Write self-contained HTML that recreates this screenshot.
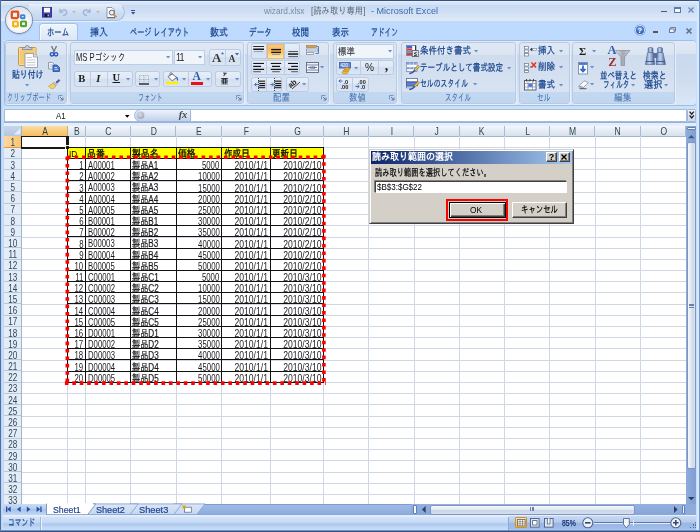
<!DOCTYPE html>
<html lang="ja"><head><meta charset="utf-8"><title>Microsoft Excel</title>
<style>
html,body{margin:0;padding:0}
body{width:700px;height:532px;overflow:hidden;position:relative;background:#c2d9f3;font-family:"Liberation Sans","IPAGothic",sans-serif;font-size:10px;color:#15428b;line-height:1}
.a{position:absolute}
.t{position:absolute;white-space:nowrap;transform-origin:0 50%;line-height:1}
.c{position:absolute;white-space:nowrap;line-height:1;text-align:center}
svg{position:absolute;overflow:visible}
</style></head>
<body>
<div id="win" style="position:absolute;left:0;top:0;width:700px;height:532px;overflow:hidden;will-change:transform">
<div class="a" style="left:0px;top:0px;width:700px;height:532px;background:#c3daf5;"></div>
<div class="a" style="left:0px;top:0px;width:700px;height:21px;background:linear-gradient(#dce8f8 0,#d3e2f6 5px,#c8dbf4 5.5px,#cfdff5 12px,#e0eaf7 20.5px);"></div>
<div class="a" style="left:0px;top:21px;width:700px;height:19px;background:#bedaff;"></div>
<div class="a" style="left:0px;top:39.5px;width:700px;height:1px;background:#d9e7fa;"></div>
<span class="t" style="transform:scaleX(0.872);left:263.60px;top:6.25px;font-size:9.5px;color:#7d8ca3;">wizard.xlsx</span>
<span class="t" style="transform:scaleX(0.875);left:310.70px;top:6.25px;font-size:9.5px;color:#5c6573;">[読み取り専用]</span>
<span class="t" style="transform:scaleX(0.954);left:370.70px;top:6.25px;font-size:9.5px;color:#3e6aaa;">- Microsoft Excel</span>
<div class="a" style="left:661px;top:11px;width:5.5px;height:1.4px;background:#5a5550;"></div>
<div class="a" style="left:674px;top:7px;width:7.2px;height:5.8px;border:1px solid #5a7aaa;border-top-width:2px;box-sizing:border-box;background:#f4f8fd;"></div>
<svg style="left:687.6px;top:7px" width="6" height="6"><path d="M0.5 0.5L5.5 5.5M5.5 0.5L0.5 5.5" stroke="#6a8ab8" stroke-width="1.25"/></svg>
<div class="a" style="left:29px;top:3.5px;width:96px;height:17px;border:1px solid #a4bfe3;border-top-color:#e9f1fb;border-radius:0 9px 9px 0;background:linear-gradient(#e1ebf8,#cbdcf2 60%,#c4d7f0);box-sizing:border-box;border-left:none;box-shadow:0 1px 0 #e6effa;"></div>
<div class="a" style="left:5.8px;top:6.7px;width:26.4px;height:26.4px;border-radius:50%;background:radial-gradient(circle at 50% 55%,#ffffff 0,#f9fafc 45%,#e6eaf1 68%,#c9d0dc 85%,#aab3c4 100%);box-shadow:0 0 0 0.9px #7f8899, 0 1px 2px rgba(40,60,100,.4);"></div>
<div class="a" style="left:6.8px;top:7.5px;width:24.4px;height:12.2px;border-radius:12.2px 12.2px 0 0;background:linear-gradient(rgba(225,230,240,.9),rgba(240,243,248,.35));"></div>
<svg style="left:10px;top:10.4px" width="18" height="18" viewBox="0 0 18 18"><rect x="1.8" y="1.7" width="6.4" height="6.4" rx="0.9" fill="none" stroke="#e2541b" stroke-width="2.3"/><rect x="10.9" y="5.1" width="3.6" height="3.2" rx="0.6" fill="none" stroke="#3a86dc" stroke-width="1.9"/><rect x="3.1" y="11.5" width="4.8" height="4.9" rx="0.7" fill="none" stroke="#f5b312" stroke-width="2.1"/><rect x="11" y="11.5" width="5" height="4.6" rx="0.7" fill="none" stroke="#58a52f" stroke-width="2.2"/><path d="M8 8L11 11M8 11.3L10.6 8.6" stroke="#fff" stroke-width="0.8" opacity="0.9"/></svg>
<svg style="left:42.3px;top:7.2px" width="10" height="11"><rect x="0.5" y="0.5" width="9" height="9.6" fill="#4646b8" stroke="#2e2e90" stroke-width="0.9"/><rect x="2" y="0.8" width="6" height="4.6" fill="#fdfdff"/><rect x="2.6" y="6.8" width="4.8" height="3.2" fill="#15153a"/><rect x="5.6" y="7.4" width="1.2" height="2" fill="#cfd3e8"/></svg>
<svg style="left:58.8px;top:8.4px" width="9" height="8"><path d="M1 0.8V4.2H4.4" fill="none" stroke="#9fb3d4" stroke-width="1.3"/><path d="M1.3 4C2.5 1.5 6.5 1 7.5 3.5C8.2 5.5 6.5 7.2 4 7.6" fill="none" stroke="#9fb3d4" stroke-width="1.5"/></svg>
<svg style="left:72.20px;top:11.41px" width="4.20" height="2.52" viewBox="0 0 5 3"><path d="M0 0H5L2.5 3z" fill="#c3bcb4"/></svg>
<svg style="left:82.3px;top:8.4px" width="9" height="8"><path d="M8 0.8V4.2H4.6" fill="none" stroke="#9fb3d4" stroke-width="1.3"/><path d="M7.7 4C6.5 1.5 2.5 1 1.5 3.5C0.8 5.5 2.5 7.2 5 7.6" fill="none" stroke="#9fb3d4" stroke-width="1.5"/></svg>
<svg style="left:96.20px;top:11.41px" width="4.20" height="2.52" viewBox="0 0 5 3"><path d="M0 0H5L2.5 3z" fill="#c3bcb4"/></svg>
<svg style="left:106px;top:7px" width="12" height="12"><path d="M1 0.5H6L8.5 3V10.5H1z" fill="#fdfdfd" stroke="#7a8494" stroke-width="0.8"/><path d="M1 10.8H9" stroke="#555" stroke-width="0.8"/><circle cx="5.8" cy="5.6" r="2.5" fill="#e9eef5" stroke="#555b66" stroke-width="0.9"/><path d="M7.6 7.6L10.4 10.2" stroke="#e08a1a" stroke-width="1.7"/></svg>
<div class="a" style="left:131px;top:9.8px;width:4.2px;height:1.1px;background:#2f4f96;"></div>
<svg style="left:130.97px;top:11.99px" width="4.25" height="2.55" viewBox="0 0 5 3"><path d="M0 0H5L2.5 3z" fill="#2f4f96"/></svg>
<div class="a" style="left:39.3px;top:22.8px;width:38.5px;height:17.7px;background:linear-gradient(#eef4fd,#e4edf8 55%,#dde7f4);border:1px solid #a3c2ea;border-bottom:none;border-radius:3.5px 3.5px 0 0;box-sizing:border-box;box-shadow:inset 1px 1px 0 #f6faff;"></div>
<span class="t" style="transform:scaleX(0.698);left:47.00px;top:27.15px;font-size:10.5px;color:#15428b;-webkit-text-stroke:0.2px #15428b;">ホーム</span>
<span class="t" style="transform:scaleX(0.857);left:90.00px;top:27.15px;font-size:10.5px;color:#15428b;-webkit-text-stroke:0.2px #15428b;">挿入</span>
<span class="t" style="transform:scaleX(0.679);left:130.00px;top:27.15px;font-size:10.5px;color:#15428b;-webkit-text-stroke:0.2px #15428b;">ページ レイアウト</span>
<span class="t" style="transform:scaleX(0.857);left:210.00px;top:27.15px;font-size:10.5px;color:#15428b;-webkit-text-stroke:0.2px #15428b;">数式</span>
<span class="t" style="transform:scaleX(0.730);left:249.00px;top:27.15px;font-size:10.5px;color:#15428b;-webkit-text-stroke:0.2px #15428b;">データ</span>
<span class="t" style="transform:scaleX(0.810);left:292.00px;top:27.15px;font-size:10.5px;color:#15428b;-webkit-text-stroke:0.2px #15428b;">校閲</span>
<span class="t" style="transform:scaleX(0.810);left:332.00px;top:27.15px;font-size:10.5px;color:#15428b;-webkit-text-stroke:0.2px #15428b;">表示</span>
<span class="t" style="transform:scaleX(0.643);left:371.00px;top:27.15px;font-size:10.5px;color:#15428b;-webkit-text-stroke:0.2px #15428b;">アドイン</span>
<div class="a" style="left:635.5px;top:26.3px;width:8.2px;height:8.2px;border-radius:50%;background:radial-gradient(circle at 50% 35%,#7fb0f0,#1f4fb0 80%);box-shadow:0 0 0 0.8px #f2f6fc,0 0 0 1.5px #6a8fc8;"></div>
<span class="t" style="left:637.50px;top:26.75px;font-size:7.5px;color:#fff;font-weight:bold;">?</span>
<div class="a" style="left:653px;top:31.4px;width:5px;height:1.4px;background:#5a5550;"></div>
<svg style="left:669px;top:27.4px" width="7" height="6"><rect x="1.8" y="0.6" width="4.6" height="3.4" fill="#f4f8fd" stroke="#5a6d90" stroke-width="0.9"/><rect x="0.5" y="2" width="4.6" height="3.4" fill="#f4f8fd" stroke="#5a6d90" stroke-width="0.9"/></svg>
<svg style="left:686.4px;top:27.6px" width="6" height="6"><path d="M0.5 0.5L5.5 5.5M5.5 0.5L0.5 5.5" stroke="#66707f" stroke-width="1.5"/></svg>
<div class="a" style="left:3.5px;top:40.3px;width:693px;height:65.6px;border:1px solid #9fbde6;border-radius:3.5px;background:linear-gradient(#e1e9f4 0,#d9e3f1 13px,#c8d8ee 13.5px,#cfddf0 40px,#d9e7f7 100%);box-sizing:border-box;"></div>
<div class="a" style="left:4.5px;top:105.9px;width:691px;height:1px;background:#bfe6f4;"></div>
<div class="a" style="left:5.4px;top:41.7px;width:62.00000000000001px;height:62px;border:1px solid #b9cbe4;border-radius:3px;background:linear-gradient(#e0e8f4 0,#dbe5f2 11.5px,#cfdcee 12px,#d8e4f3 51px);box-sizing:border-box;overflow:hidden;box-shadow:1px 1px 0 #e6eef9;"><div class="a" style="left:0;right:0;bottom:0;height:10.6px;background:linear-gradient(#c3d8f0,#c0d6f0);"></div></div>
<span class="t" style="transform:scaleX(0.629);left:7.20px;top:93.20px;font-size:10px;color:#3e6aaa;">クリップボード</span>
<div class="a" style="left:70.3px;top:41.7px;width:173.3px;height:62px;border:1px solid #b9cbe4;border-radius:3px;background:linear-gradient(#e0e8f4 0,#dbe5f2 11.5px,#cfdcee 12px,#d8e4f3 51px);box-sizing:border-box;overflow:hidden;box-shadow:1px 1px 0 #e6eef9;"><div class="a" style="left:0;right:0;bottom:0;height:10.6px;background:linear-gradient(#c3d8f0,#c0d6f0);"></div></div>
<span class="t" style="transform:scaleX(0.613);left:138.00px;top:93.20px;font-size:10px;color:#3e6aaa;">フォント</span>
<div class="a" style="left:247.1px;top:41.7px;width:82.20000000000002px;height:62px;border:1px solid #b9cbe4;border-radius:3px;background:linear-gradient(#e0e8f4 0,#dbe5f2 11.5px,#cfdcee 12px,#d8e4f3 51px);box-sizing:border-box;overflow:hidden;box-shadow:1px 1px 0 #e6eef9;"><div class="a" style="left:0;right:0;bottom:0;height:10.6px;background:linear-gradient(#c3d8f0,#c0d6f0);"></div></div>
<span class="t" style="transform:scaleX(0.850);left:273.00px;top:93.20px;font-size:10px;color:#3e6aaa;">配置</span>
<div class="a" style="left:332.9px;top:41.7px;width:64.5px;height:62px;border:1px solid #b9cbe4;border-radius:3px;background:linear-gradient(#e0e8f4 0,#dbe5f2 11.5px,#cfdcee 12px,#d8e4f3 51px);box-sizing:border-box;overflow:hidden;box-shadow:1px 1px 0 #e6eef9;"><div class="a" style="left:0;right:0;bottom:0;height:10.6px;background:linear-gradient(#c3d8f0,#c0d6f0);"></div></div>
<span class="t" style="transform:scaleX(0.850);left:349.30px;top:93.20px;font-size:10px;color:#3e6aaa;">数値</span>
<div class="a" style="left:400.7px;top:41.7px;width:115.30000000000001px;height:62px;border:1px solid #b9cbe4;border-radius:3px;background:linear-gradient(#e0e8f4 0,#dbe5f2 11.5px,#cfdcee 12px,#d8e4f3 51px);box-sizing:border-box;overflow:hidden;box-shadow:1px 1px 0 #e6eef9;"><div class="a" style="left:0;right:0;bottom:0;height:10.6px;background:linear-gradient(#c3d8f0,#c0d6f0);"></div></div>
<span class="t" style="transform:scaleX(0.650);left:445.00px;top:93.20px;font-size:10px;color:#3e6aaa;">スタイル</span>
<div class="a" style="left:519.3px;top:41.7px;width:50.30000000000007px;height:62px;border:1px solid #b9cbe4;border-radius:3px;background:linear-gradient(#e0e8f4 0,#dbe5f2 11.5px,#cfdcee 12px,#d8e4f3 51px);box-sizing:border-box;overflow:hidden;box-shadow:1px 1px 0 #e6eef9;"><div class="a" style="left:0;right:0;bottom:0;height:10.6px;background:linear-gradient(#c3d8f0,#c0d6f0);"></div></div>
<span class="t" style="transform:scaleX(0.675);left:537.20px;top:93.20px;font-size:10px;color:#3e6aaa;">セル</span>
<div class="a" style="left:572.1px;top:41.7px;width:102.5px;height:62px;border:1px solid #b9cbe4;border-radius:3px;background:linear-gradient(#e0e8f4 0,#dbe5f2 11.5px,#cfdcee 12px,#d8e4f3 51px);box-sizing:border-box;overflow:hidden;box-shadow:1px 1px 0 #e6eef9;"><div class="a" style="left:0;right:0;bottom:0;height:10.6px;background:linear-gradient(#c3d8f0,#c0d6f0);"></div></div>
<span class="t" style="transform:scaleX(0.875);left:614.00px;top:93.20px;font-size:10px;color:#3e6aaa;">編集</span>
<svg style="left:57.7px;top:95px" width="6" height="6"><path d="M0.5 4.5V0.5H4.5" fill="none" stroke="#7f97ba"/><path d="M2 2L5 5M5 2.5V5H2.5" fill="none" stroke="#5f7aa6"/></svg>
<svg style="left:235.5px;top:95px" width="6" height="6"><path d="M0.5 4.5V0.5H4.5" fill="none" stroke="#7f97ba"/><path d="M2 2L5 5M5 2.5V5H2.5" fill="none" stroke="#5f7aa6"/></svg>
<svg style="left:320.7px;top:95px" width="6" height="6"><path d="M0.5 4.5V0.5H4.5" fill="none" stroke="#7f97ba"/><path d="M2 2L5 5M5 2.5V5H2.5" fill="none" stroke="#5f7aa6"/></svg>
<svg style="left:388.5px;top:95px" width="6" height="6"><path d="M0.5 4.5V0.5H4.5" fill="none" stroke="#7f97ba"/><path d="M2 2L5 5M5 2.5V5H2.5" fill="none" stroke="#5f7aa6"/></svg>
<svg style="left:18px;top:45px" width="20" height="23"><rect x="0.500" y="2.500" width="17.500" height="18" rx="1" fill="#f2c977" stroke="#c79746"/><rect x="1.500" y="3.500" width="15.500" height="16" fill="none" stroke="#f9dfa6" stroke-width="0.800"/><path d="M4.500 4.500V2.500H7.200A2 2 0 0 1 11.200 2.500H14V4.500z" fill="#c9ccd2" stroke="#7d8390" stroke-width="0.800"/><path d="M7 8.500H15.500L19.500 12V22.500H7z" fill="#fdfdfe" stroke="#8e98a8" stroke-width="0.900"/><path d="M15.500 8.500V12H19.500" fill="#e2e6ee" stroke="#8e98a8" stroke-width="0.800"/><path d="M9 12.500H14M9 15H17.500M9 17.500H17.500M9 20H17.500" stroke="#c5c9d2" stroke-width="1.200"/></svg>
<span class="t" style="transform:scaleX(0.787);left:11.50px;top:70.30px;font-size:10px;color:#15428b;-webkit-text-stroke:0.250px #15428b;">貼り付け</span>
<svg style="left:24.90px;top:83.71px" width="4.20" height="2.52" viewBox="0 0 5 3"><path d="M0 0H5L2.5 3z" fill="#6d90c6"/></svg>
<svg style="left:49.5px;top:45.5px" width="8" height="11"><path d="M1.500 0L4.500 6.500M6.500 0L3.500 6.500" stroke="#6d7684" stroke-width="1.300" fill="none"/><circle cx="2" cy="8.300" r="1.700" fill="none" stroke="#2c55b8" stroke-width="1.400"/><circle cx="6" cy="8.300" r="1.700" fill="none" stroke="#2c55b8" stroke-width="1.400"/></svg>
<svg style="left:48px;top:62px" width="12" height="10"><path d="M0.500 0.500H4.500L6.500 2.500V7H0.500z" fill="#f4f6fa" stroke="#7d8aa0" stroke-width="0.800"/><path d="M1.500 3H5M1.500 4.800H5" stroke="#9fb0cc" stroke-width="0.700"/><path d="M5 3H9L11.500 5.500V9.500H5z" fill="#4a78d0" stroke="#2a4c9a" stroke-width="0.800"/><path d="M6.500 5.500H9M6.500 7.300H10" stroke="#dfe8fa" stroke-width="0.800"/></svg>
<svg style="left:48px;top:79px" width="12" height="10"><path d="M8 3L11 0.500L11.800 1.500L9.200 4.200z" fill="#5b57b0" stroke="#3d3a8a" stroke-width="0.600"/><path d="M6.300 3.200L9 5.500L7.800 6.800L5 4.500z" fill="#c9ccd6" stroke="#7a8090" stroke-width="0.500"/><path d="M5 4.300L8 7L5.500 9.500C3.500 10 1.500 8.500 0.500 7z" fill="#f1d35f" stroke="#b89a2e" stroke-width="0.600"/></svg>
<div class="a" style="left:73.5px;top:49.5px;width:99.5px;height:15.799999999999997px;border:1px solid #bccee7;background:#f0f5fc;box-sizing:border-box;"></div>
<span class="t" style="transform:scaleX(0.743);left:75.70px;top:52.75px;font-size:10.3px;color:#1c1c1c;">MS Pゴシック</span>
<svg style="left:165.90px;top:56.11px" width="4.20" height="2.52" viewBox="0 0 5 3"><path d="M0 0H5L2.5 3z" fill="#6d90c6"/></svg>
<div class="a" style="left:174.3px;top:49.5px;width:31.0px;height:15.799999999999997px;border:1px solid #bccee7;background:#f0f5fc;box-sizing:border-box;"></div>
<span class="t" style="left:175.60px;top:52.90px;font-size:10px;color:#1c1c1c;letter-spacing:-0.9px;transform:scaleX(0.9);">11</span>
<svg style="left:197.90px;top:56.11px" width="4.20" height="2.52" viewBox="0 0 5 3"><path d="M0 0H5L2.5 3z" fill="#6d90c6"/></svg>
<div class="a" style="left:208.6px;top:49.2px;width:32.80000000000001px;height:16.39999999999999px;border:1px solid #b9cbe5;border-radius:2.5px;background:linear-gradient(#e6eef8 0,#dfe8f5 45%,#d3dff0 50%,#dbe6f4 100%);box-sizing:border-box;"></div>
<div class="a" style="left:224.5px;top:50.2px;width:1px;height:14.399999999999991px;background:#bdcde5;"></div>
<span class="t" style="left:212.00px;top:51.30px;font-size:13px;color:#3a3a3a;font-family:'Liberation Serif',serif;font-weight:bold;">A</span>
<svg style="left:220.5px;top:51.5px" width="3" height="2.2"><path d="M0 2.200L1.500 0L3 2.200z" fill="#3569c0"/></svg>
<span class="t" style="left:228.60px;top:54.00px;font-size:9.6px;color:#3a3a3a;font-family:'Liberation Serif',serif;font-weight:bold;">A</span>
<svg style="left:234.5px;top:52.5px" width="4" height="2.4"><path d="M0 0H4L2 2.400z" fill="#3569c0"/></svg>
<div class="a" style="left:73.6px;top:71.2px;width:59.0px;height:15.399999999999991px;border:1px solid #b9cbe5;border-radius:2.5px;background:linear-gradient(#e6eef8 0,#dfe8f5 45%,#d3dff0 50%,#dbe6f4 100%);box-sizing:border-box;"></div>
<div class="a" style="left:89.5px;top:72.2px;width:1px;height:13.399999999999991px;background:#bdcde5;"></div>
<div class="a" style="left:107.0px;top:72.2px;width:1px;height:13.399999999999991px;background:#bdcde5;"></div>
<span class="t" style="left:78.30px;top:73.55px;font-size:10.5px;color:#1a1a1a;font-family:'Liberation Serif',serif;font-weight:bold;">B</span>
<span class="t" style="left:96.20px;top:73.55px;font-size:10.5px;color:#1a1a1a;font-family:'Liberation Serif',serif;font-weight:bold;font-style:italic;">I</span>
<span class="t" style="left:112.50px;top:73.25px;font-size:10.5px;color:#1a1a1a;font-family:'Liberation Serif',serif;font-weight:bold;text-decoration:underline;">U</span>
<svg style="left:125.80px;top:77.71px" width="4.20" height="2.52" viewBox="0 0 5 3"><path d="M0 0H5L2.5 3z" fill="#6d90c6"/></svg>
<div class="a" style="left:135.4px;top:71.2px;width:25.0px;height:15.399999999999991px;border:1px solid #b9cbe5;border-radius:2.5px;background:linear-gradient(#e6eef8 0,#dfe8f5 45%,#d3dff0 50%,#dbe6f4 100%);box-sizing:border-box;"></div>
<svg style="left:139px;top:74.5px" width="10" height="10"><path d="M0.500 0.500H9.500M0.500 0.500V8M9.500 0.500V8M5 0.500V8M0.500 4.500H9.500" stroke="#8d9ab0" stroke-width="0.8" stroke-dasharray="0.9 0.9" fill="none"/><path d="M0 9H10" stroke="#222" stroke-width="1.400"/></svg>
<svg style="left:154.00px;top:77.71px" width="4.20" height="2.52" viewBox="0 0 5 3"><path d="M0 0H5L2.5 3z" fill="#6d90c6"/></svg>
<div class="a" style="left:163.3px;top:71.2px;width:49.099999999999994px;height:15.399999999999991px;border:1px solid #b9cbe5;border-radius:2.5px;background:linear-gradient(#e6eef8 0,#dfe8f5 45%,#d3dff0 50%,#dbe6f4 100%);box-sizing:border-box;"></div>
<div class="a" style="left:187.5px;top:72.2px;width:1px;height:13.399999999999991px;background:#bdcde5;"></div>
<svg style="left:165.9px;top:72.4px" width="13" height="13"><rect x="0" y="9.700" width="12.300" height="2.600" fill="#ffee00"/><path d="M2 4.600L6.300 1.900L10.600 5.600L6.200 8.800z" fill="#fbfcfe" stroke="#4a4f5c" stroke-width="0.800" stroke-linejoin="round"/><path d="M4.300 3.300C3.300 1.200 4.600 0.200 5.600 0.800C6.300 1.300 6.200 2.300 6 3" fill="none" stroke="#4a4f5c" stroke-width="0.700"/><path d="M10.200 4.600C12 5 12.600 7 11.800 9C10.800 8.200 10.200 6.800 10.200 4.600z" fill="#2f6fd8"/></svg>
<svg style="left:181.80px;top:77.71px" width="4.20" height="2.52" viewBox="0 0 5 3"><path d="M0 0H5L2.5 3z" fill="#6d90c6"/></svg>
<span class="t" style="left:192.50px;top:71.25px;font-size:11.5px;color:#2a5aa8;font-family:'Liberation Serif',serif;font-weight:bold;">A</span>
<div class="a" style="left:191.2px;top:82.2px;width:11.7px;height:2.8px;background:#ee1111;"></div>
<svg style="left:206.00px;top:77.71px" width="4.20" height="2.52" viewBox="0 0 5 3"><path d="M0 0H5L2.5 3z" fill="#6d90c6"/></svg>
<div class="a" style="left:215.3px;top:71.2px;width:26.099999999999994px;height:15.399999999999991px;border:1px solid #b9cbe5;border-radius:2.5px;background:linear-gradient(#e6eef8 0,#dfe8f5 45%,#d3dff0 50%,#dbe6f4 100%);box-sizing:border-box;"></div>
<span class="t" style="left:222.60px;top:72.60px;font-size:4.6px;color:#000;-webkit-text-stroke:0.2px #000;">ア</span>
<span class="t" style="left:220.80px;top:77.80px;font-size:7.6px;color:#000;-webkit-text-stroke:0.2px #000;">亜</span>
<svg style="left:234.80px;top:77.71px" width="4.20" height="2.52" viewBox="0 0 5 3"><path d="M0 0H5L2.5 3z" fill="#6d90c6"/></svg>
<div class="a" style="left:250.7px;top:43.2px;width:49.69999999999999px;height:15.799999999999997px;border:1px solid #b9cbe5;border-radius:2.5px;background:linear-gradient(#e6eef8 0,#dfe8f5 45%,#d3dff0 50%,#dbe6f4 100%);box-sizing:border-box;"></div>
<div class="a" style="left:266.4px;top:44.2px;width:1px;height:13.799999999999997px;background:#bdcde5;"></div>
<div class="a" style="left:283.5px;top:44.2px;width:1px;height:13.799999999999997px;background:#bdcde5;"></div>
<div class="a" style="left:267.2px;top:43.6px;width:16.9px;height:15px;background:linear-gradient(#f7c98f 0,#fbb857 35%,#fdd37a 70%,#fdebb0 100%);border:1px solid #ecb86a;box-sizing:border-box;"></div>
<svg style="left:0px;top:0px" width="700" height="532"><rect x="253.20" y="46.00" width="10.80" height="0.90" fill="#161616"/><rect x="253.20" y="48.50" width="10.80" height="1.50" fill="#161616"/><rect x="254.00" y="51.10" width="9.00" height="0.80" fill="#8a8f99"/></svg>
<svg style="left:0px;top:0px" width="700" height="532"><rect x="271.20" y="48.90" width="9.80" height="1.40" fill="#161616"/><rect x="271.20" y="51.70" width="9.80" height="1.40" fill="#161616"/><rect x="272.00" y="54.10" width="8.00" height="0.80" fill="#8a8f99"/></svg>
<svg style="left:0px;top:0px" width="700" height="532"><rect x="288.40" y="51.00" width="9.60" height="0.90" fill="#444"/><rect x="288.00" y="53.30" width="10.20" height="1.50" fill="#161616"/><rect x="288.40" y="56.20" width="9.60" height="0.90" fill="#444"/></svg>
<div class="a" style="left:250.7px;top:59.8px;width:49.69999999999999px;height:15.0px;border:1px solid #b9cbe5;border-radius:2.5px;background:linear-gradient(#e6eef8 0,#dfe8f5 45%,#d3dff0 50%,#dbe6f4 100%);box-sizing:border-box;"></div>
<div class="a" style="left:266.4px;top:60.8px;width:1px;height:13.0px;background:#bdcde5;"></div>
<div class="a" style="left:283.5px;top:60.8px;width:1px;height:13.0px;background:#bdcde5;"></div>
<svg style="left:0px;top:0px" width="700" height="532"><rect x="253.20" y="62.90" width="10.80" height="1.10" fill="#161616"/><rect x="253.20" y="65.80" width="7.80" height="1.20" fill="#161616"/><rect x="253.20" y="68.80" width="10.80" height="1.20" fill="#161616"/><rect x="253.20" y="71.30" width="7.60" height="0.90" fill="#444"/></svg>
<svg style="left:0px;top:0px" width="700" height="532"><rect x="270.80" y="62.90" width="10.40" height="1.10" fill="#161616"/><rect x="272.00" y="65.80" width="8.00" height="1.20" fill="#161616"/><rect x="270.80" y="68.80" width="10.40" height="1.20" fill="#161616"/><rect x="272.20" y="71.30" width="7.60" height="0.90" fill="#444"/></svg>
<svg style="left:0px;top:0px" width="700" height="532"><rect x="288.00" y="62.90" width="10.00" height="1.10" fill="#161616"/><rect x="291.20" y="65.80" width="6.80" height="1.20" fill="#161616"/><rect x="288.00" y="68.80" width="10.00" height="1.20" fill="#161616"/><rect x="291.20" y="71.30" width="6.80" height="0.90" fill="#444"/></svg>
<div class="a" style="left:250.5px;top:76.5px;width:31.80000000000001px;height:15.200000000000003px;border:1px solid #b9cbe5;border-radius:2.5px;background:linear-gradient(#e6eef8 0,#dfe8f5 45%,#d3dff0 50%,#dbe6f4 100%);box-sizing:border-box;"></div>
<div class="a" style="left:266.1px;top:77.5px;width:1px;height:13.200000000000003px;background:#bdcde5;"></div>
<svg style="left:0px;top:0px" width="700" height="532"><rect x="258.20" y="80.60" width="7.00" height="1.10" fill="#161616"/><rect x="259.20" y="82.90" width="6.00" height="1.20" fill="#161616"/><rect x="259.20" y="85.00" width="6.00" height="1.20" fill="#161616"/><rect x="258.20" y="87.20" width="7.00" height="1.00" fill="#161616"/></svg>
<svg style="left:253.6px;top:81.8px" width="5" height="5"><path d="M4 2.500H1M2.400 0.700L0.600 2.500L2.400 4.300" stroke="#3a72d0" stroke-width="1" fill="none"/></svg>
<div class="a" style="left:258.3px;top:78px;width:0.7px;height:12.5px;background:repeating-linear-gradient(#444 0,#444 1px,transparent 1px,transparent 2px);"></div>
<svg style="left:0px;top:0px" width="700" height="532"><rect x="274.20" y="80.60" width="7.00" height="1.10" fill="#161616"/><rect x="275.20" y="82.90" width="6.00" height="1.20" fill="#161616"/><rect x="275.20" y="85.00" width="6.00" height="1.20" fill="#161616"/><rect x="274.20" y="87.20" width="7.00" height="1.00" fill="#161616"/></svg>
<svg style="left:269.6px;top:81.8px" width="5" height="5"><path d="M0.300 2.500H3.500M2.100 0.700L3.900 2.500L2.100 4.300" stroke="#3a72d0" stroke-width="1" fill="none"/></svg>
<div class="a" style="left:274.3px;top:78px;width:0.7px;height:12.5px;background:repeating-linear-gradient(#444 0,#444 1px,transparent 1px,transparent 2px);"></div>
<div class="a" style="left:285.7px;top:76.7px;width:23.19999999999999px;height:15.0px;border:1px solid #b9cbe5;border-radius:2.5px;background:linear-gradient(#e6eef8 0,#dfe8f5 45%,#d3dff0 50%,#dbe6f4 100%);box-sizing:border-box;"></div>
<svg style="left:288.5px;top:79px" width="12" height="11"><text x="0" y="7" font-size="7.5" font-weight="bold" font-family="Liberation Sans, sans-serif" fill="#1a1a1a" transform="rotate(-40 4 6)">ab</text><path d="M3 10L11 3" stroke="#5a3a2a" stroke-width="1"/></svg>
<svg style="left:301.50px;top:83.21px" width="4.20" height="2.52" viewBox="0 0 5 3"><path d="M0 0H5L2.5 3z" fill="#6d90c6"/></svg>
<svg style="left:305.5px;top:45.3px" width="13" height="12"><rect x="0.500" y="0.500" width="10" height="2" fill="#e9a03a" stroke="#7a6a50" stroke-width="0.500"/><rect x="0.500" y="4" width="11.500" height="2" fill="#f4f6fa" stroke="#6a7890" stroke-width="0.600"/><rect x="0.500" y="7.500" width="7" height="2" fill="#f4f6fa" stroke="#6a7890" stroke-width="0.600"/><path d="M11 1.500H12.500V8.500H9.500" fill="none" stroke="#4a6fb0" stroke-width="0.900"/></svg>
<svg style="left:305.5px;top:62px" width="13" height="11"><rect x="0.500" y="0.500" width="12" height="10" fill="#eef2f8" stroke="#5a6a85" stroke-width="0.900"/><rect x="0.500" y="3" width="12" height="5" fill="#fff" stroke="#5a6a85" stroke-width="0.800"/><path d="M2 5.500H5M8 5.500H11M4 4.300L5.200 5.500L4 6.700M9 4.300L7.800 5.500L9 6.700" stroke="#2f55b0" stroke-width="0.800" fill="none"/><text x="5.200" y="7.300" font-size="4.500" font-family="Liberation Sans, sans-serif" fill="#222">a</text></svg>
<svg style="left:320.30px;top:66.21px" width="4.20" height="2.52" viewBox="0 0 5 3"><path d="M0 0H5L2.5 3z" fill="#6d90c6"/></svg>
<div class="a" style="left:335.7px;top:43.8px;width:58.60000000000002px;height:15.100000000000001px;border:1px solid #bccee7;background:#f0f5fc;box-sizing:border-box;"></div>
<span class="t" style="transform:scaleX(0.850);left:338.30px;top:46.50px;font-size:10px;color:#1c1c1c;">標準</span>
<svg style="left:387.50px;top:50.21px" width="4.20" height="2.52" viewBox="0 0 5 3"><path d="M0 0H5L2.5 3z" fill="#6d90c6"/></svg>
<div class="a" style="left:335.7px;top:60.3px;width:58.60000000000002px;height:14.600000000000009px;border:1px solid #b9cbe5;border-radius:2.5px;background:linear-gradient(#e6eef8 0,#dfe8f5 45%,#d3dff0 50%,#dbe6f4 100%);box-sizing:border-box;"></div>
<div class="a" style="left:360.2px;top:61.3px;width:1px;height:12.600000000000009px;background:#bdcde5;"></div>
<div class="a" style="left:378.1px;top:61.3px;width:1px;height:12.600000000000009px;background:#bdcde5;"></div>
<svg style="left:338.5px;top:62px" width="13" height="12"><rect x="0.500" y="0.500" width="11" height="5.500" fill="#6a8fd0" stroke="#3a55a0" stroke-width="0.800"/><text x="1.500" y="5" font-size="4.500" font-family="Liberation Sans, sans-serif" fill="#fff">420</text><ellipse cx="8" cy="7" rx="3" ry="1.300" fill="#f0b838" stroke="#a87818" stroke-width="0.500"/><ellipse cx="7" cy="8.800" rx="3" ry="1.300" fill="#f0b838" stroke="#a87818" stroke-width="0.500"/><ellipse cx="6" cy="10.500" rx="3" ry="1.300" fill="#f0b838" stroke="#a87818" stroke-width="0.500"/></svg>
<svg style="left:353.90px;top:66.91px" width="4.20" height="2.52" viewBox="0 0 5 3"><path d="M0 0H5L2.5 3z" fill="#6d90c6"/></svg>
<span class="t" style="transform:scaleX(1.011);left:365.00px;top:62.80px;font-size:10px;color:#222;">%</span>
<span class="t" style="left:384.80px;top:59.00px;font-size:14px;color:#222;font-family:'Liberation Serif',serif;font-weight:bold;">,</span>
<div class="a" style="left:335.7px;top:77px;width:32.900000000000034px;height:14.700000000000003px;border:1px solid #b9cbe5;border-radius:2.5px;background:linear-gradient(#e6eef8 0,#dfe8f5 45%,#d3dff0 50%,#dbe6f4 100%);box-sizing:border-box;"></div>
<div class="a" style="left:352.4px;top:78px;width:1px;height:12.700000000000003px;background:#bdcde5;"></div>
<svg style="left:338px;top:79px" width="14" height="11"><path d="M4.500 2H1M2.500 0.500L0.800 2L2.500 3.500" stroke="#2f6bd0" stroke-width="1" fill="none"/><text x="5.500" y="4.500" font-size="5.6" font-weight="bold" font-family="Liberation Sans, sans-serif" fill="#1a1a1a">.0</text><text x="2.500" y="10" font-size="5.6" font-weight="bold" font-family="Liberation Sans, sans-serif" fill="#1a1a1a">.00</text></svg>
<svg style="left:354.5px;top:79px" width="14" height="11"><text x="3" y="4.500" font-size="5.6" font-weight="bold" font-family="Liberation Sans, sans-serif" fill="#1a1a1a">.00</text><path d="M0.500 7.500H4M2.500 6L4.200 7.500L2.500 9" stroke="#2f6bd0" stroke-width="1" fill="none"/><text x="5.500" y="10" font-size="5.6" font-weight="bold" font-family="Liberation Sans, sans-serif" fill="#1a1a1a">.0</text></svg>
<svg style="left:405.5px;top:44.8px" width="13" height="12"><rect x="0.5" y="0.5" width="9.2" height="10" fill="#fff" stroke="#6a7590" stroke-width="0.8"/><rect x="1" y="1" width="5.200" height="2.200" fill="#3a66c8"/><rect x="1" y="3.400" width="5.200" height="2.200" fill="#d93a2a"/><rect x="1" y="5.800" width="5.200" height="2" fill="#5a86d8"/><rect x="1" y="8" width="5.200" height="2.200" fill="#d93a2a"/><path d="M9.700 0.500V10.500" stroke="#222" stroke-width="1"/><rect x="6.300" y="5.600" width="6" height="6" fill="#e9edf3" stroke="#4f5666" stroke-width="0.800"/><path d="M10.800 7.200L8 8.400L10.800 9.600M8 10.600H10.800" stroke="#111" stroke-width="0.800" fill="none"/></svg>
<span class="t" style="transform:scaleX(0.850);left:419.70px;top:46.00px;font-size:10px;color:#15428b;-webkit-text-stroke:0.2px #15428b;">条件付き書式</span>
<svg style="left:474.30px;top:50.21px" width="4.20" height="2.52" viewBox="0 0 5 3"><path d="M0 0H5L2.5 3z" fill="#6d90c6"/></svg>
<svg style="left:405.5px;top:61.8px" width="13" height="12"><rect x="0.500" y="0.500" width="10.500" height="9" fill="#fff" stroke="#7a86a0" stroke-width="0.800"/><rect x="0.900" y="0.900" width="9.700" height="2" fill="#7d9fe0"/><rect x="0.900" y="5" width="9.700" height="2.200" fill="#6a8fd6"/><path d="M0.500 3H11M0.500 5H11M0.500 7.300H11M4 0.500V9.500M7.500 0.500V9.500" stroke="#e8edf6" stroke-width="0.600"/><path d="M12.300 4.600L8.800 8.200" stroke="#8a6a20" stroke-width="2.300" stroke-linecap="round"/><path d="M12.300 4.600L8.800 8.200" stroke="#f5c23c" stroke-width="1.500" stroke-linecap="round"/><path d="M8.400 8.600C7.500 10 6 11.200 4 11.300" stroke="#2f55b0" stroke-width="1.700" stroke-linecap="round" fill="none"/></svg>
<span class="t" style="transform:scaleX(0.755);left:419.70px;top:62.70px;font-size:10px;color:#15428b;-webkit-text-stroke:0.2px #15428b;">テーブルとして書式設定</span>
<svg style="left:506.50px;top:66.91px" width="4.20" height="2.52" viewBox="0 0 5 3"><path d="M0 0H5L2.5 3z" fill="#6d90c6"/></svg>
<svg style="left:405.5px;top:78.3px" width="13" height="12"><rect x="0.500" y="0.500" width="11" height="3.200" fill="#fff" stroke="#5a6a90" stroke-width="0.800"/><rect x="0.500" y="4.300" width="11" height="3.400" fill="#5a82d8" stroke="#3a55a0" stroke-width="0.800"/><rect x="0.500" y="8.300" width="7" height="1.600" fill="#fff" stroke="#5a6a90" stroke-width="0.600"/><path d="M12.300 4.600L8.800 8.200" stroke="#8a6a20" stroke-width="2.300" stroke-linecap="round"/><path d="M12.300 4.600L8.800 8.200" stroke="#f5c23c" stroke-width="1.500" stroke-linecap="round"/><path d="M8.400 8.600C7.500 10 6 11.200 4 11.300" stroke="#2f55b0" stroke-width="1.700" stroke-linecap="round" fill="none"/></svg>
<span class="t" style="transform:scaleX(0.686);left:419.70px;top:79.00px;font-size:10px;color:#15428b;-webkit-text-stroke:0.2px #15428b;">セルのスタイル</span>
<svg style="left:472.50px;top:83.21px" width="4.20" height="2.52" viewBox="0 0 5 3"><path d="M0 0H5L2.5 3z" fill="#6d90c6"/></svg>
<svg style="left:523.5px;top:45.5px" width="13" height="11"><rect x="0.500" y="0.500" width="4" height="2.500" fill="#fff" stroke="#6a7890" stroke-width="0.700"/><rect x="0.500" y="4" width="4" height="2.500" fill="#fff" stroke="#6a7890" stroke-width="0.700"/><rect x="0.500" y="7.500" width="4" height="2.500" fill="#fff" stroke="#6a7890" stroke-width="0.700"/><path d="M12 3.500H6.500M8 2L6.300 3.500L8 5" stroke="#333" stroke-width="0.900" fill="none"/><rect x="8.500" y="2.500" width="4" height="2" fill="#fff" stroke="#6a7890" stroke-width="0.600"/></svg>
<span class="t" style="transform:scaleX(0.850);left:538.00px;top:45.50px;font-size:10px;color:#15428b;-webkit-text-stroke:0.2px #15428b;">挿入</span>
<svg style="left:559.30px;top:49.91px" width="4.20" height="2.52" viewBox="0 0 5 3"><path d="M0 0H5L2.5 3z" fill="#6d90c6"/></svg>
<svg style="left:523.5px;top:62px" width="13" height="11"><rect x="0.500" y="1.500" width="4" height="2.500" fill="#fff" stroke="#6a7890" stroke-width="0.700"/><rect x="0.500" y="5" width="4" height="2.500" fill="#fff" stroke="#6a7890" stroke-width="0.700"/><rect x="0.500" y="8.500" width="4" height="2" fill="#fff" stroke="#6a7890" stroke-width="0.700"/><path d="M6 5H8" stroke="#333" stroke-width="0.800"/><path d="M7.500 0.500L12 5.500M12 0.500L7.500 5.500" stroke="#e8321a" stroke-width="1.500"/></svg>
<span class="t" style="transform:scaleX(0.850);left:538.00px;top:62.30px;font-size:10px;color:#15428b;-webkit-text-stroke:0.2px #15428b;">削除</span>
<svg style="left:559.30px;top:66.41px" width="4.20" height="2.52" viewBox="0 0 5 3"><path d="M0 0H5L2.5 3z" fill="#6d90c6"/></svg>
<svg style="left:523.5px;top:78.5px" width="13" height="12"><rect x="0.500" y="1.500" width="11.500" height="9.500" fill="#fff" stroke="#4a5568" stroke-width="0.900"/><path d="M0.500 4.500H12M0.500 8H12M4 1.500V11M8.500 1.500V11" stroke="#7a86a0" stroke-width="0.700"/><rect x="4.300" y="4.800" width="4" height="3" fill="#4a78e0"/><path d="M2.500 0V2.500M6 0V2.500M9.500 0V2.500" stroke="#333" stroke-width="0.900"/></svg>
<span class="t" style="transform:scaleX(0.850);left:538.00px;top:79.60px;font-size:10px;color:#15428b;-webkit-text-stroke:0.2px #15428b;">書式</span>
<svg style="left:559.30px;top:83.71px" width="4.20" height="2.52" viewBox="0 0 5 3"><path d="M0 0H5L2.5 3z" fill="#6d90c6"/></svg>
<span class="t" style="left:579.00px;top:45.50px;font-size:11px;color:#1a1a1a;font-family:'Liberation Serif',serif;font-weight:bold;">Σ</span>
<svg style="left:591.50px;top:49.91px" width="4.20" height="2.52" viewBox="0 0 5 3"><path d="M0 0H5L2.5 3z" fill="#6d90c6"/></svg>
<svg style="left:578px;top:61.7px" width="10" height="12.5"><rect x="0.500" y="0.500" width="9" height="11.500" fill="#fff" stroke="#7d8aa6" stroke-width="0.900"/><rect x="0.900" y="0.900" width="8.200" height="2" fill="#4a78d0"/><path d="M5 3.500V9M2.500 6.800L5 9.500L7.500 6.800" stroke="#2f6bd0" stroke-width="1.800" fill="none"/></svg>
<svg style="left:590.20px;top:65.91px" width="4.20" height="2.52" viewBox="0 0 5 3"><path d="M0 0H5L2.5 3z" fill="#6d90c6"/></svg>
<svg style="left:577.5px;top:80px" width="11" height="9"><path d="M1 6L6 0.800L10.500 2.500L5.500 7.500z" fill="#f7f8fb" stroke="#7a8498" stroke-width="0.700"/><path d="M1 6L5.500 7.500L5 8.500L0.500 7z" fill="#c9cfdb" stroke="#7a8498" stroke-width="0.500"/><path d="M1.500 8.700H8.500" stroke="#333" stroke-width="0.800"/></svg>
<svg style="left:590.20px;top:83.41px" width="4.20" height="2.52" viewBox="0 0 5 3"><path d="M0 0H5L2.5 3z" fill="#6d90c6"/></svg>
<span class="t" style="left:607.60px;top:44.05px;font-size:12.5px;color:#2f5fb0;font-family:'Liberation Serif',serif;font-weight:bold;">A</span>
<span class="t" style="left:608.20px;top:55.65px;font-size:12.5px;color:#9a3030;font-family:'Liberation Serif',serif;font-weight:bold;">Z</span>
<svg style="left:615px;top:49.5px" width="15.5" height="16"><defs><linearGradient id="fg" x1="0" x2="1"><stop offset="0" stop-color="#dfe1e6"/><stop offset="0.5" stop-color="#a3a8b2"/><stop offset="1" stop-color="#cdd0d7"/></linearGradient></defs><path d="M0.500 0.500H15L9.500 7V15.500H6V7z" fill="url(#fg)" stroke="#7a808c" stroke-width="0.600"/></svg>
<span class="t" style="transform:scaleX(0.740);left:600.00px;top:71.00px;font-size:10px;color:#15428b;-webkit-text-stroke:0.2px #15428b;">並べ替えと</span>
<span class="t" style="transform:scaleX(0.662);left:603.00px;top:79.60px;font-size:10px;color:#15428b;-webkit-text-stroke:0.2px #15428b;">フィルタ</span>
<svg style="left:630.90px;top:83.91px" width="4.20" height="2.52" viewBox="0 0 5 3"><path d="M0 0H5L2.5 3z" fill="#6d90c6"/></svg>
<svg style="left:645px;top:47px" width="21" height="19"><defs><linearGradient id="bn" x1="0" x2="1"><stop offset="0" stop-color="#5f7fb8"/><stop offset="0.450" stop-color="#c5d3ea"/><stop offset="1" stop-color="#3f5f9a"/></linearGradient></defs><rect x="3" y="0.500" width="5" height="5" rx="1.500" fill="url(#bn)" stroke="#3a5080" stroke-width="0.500"/><rect x="12.500" y="0.500" width="5" height="5" rx="1.500" fill="url(#bn)" stroke="#3a5080" stroke-width="0.500"/><path d="M2.500 5.500H8.500L9.500 17.500H0.500z" fill="url(#bn)" stroke="#3a5080" stroke-width="0.500"/><path d="M12 5.500H18L20.500 17.500H11z" fill="url(#bn)" stroke="#3a5080" stroke-width="0.500"/><rect x="8" y="6" width="4.500" height="5" fill="#56709f"/><path d="M0.500 14.500H9.300M11.300 14.500H20" stroke="#2f4a80" stroke-width="0.800"/></svg>
<span class="t" style="transform:scaleX(0.783);left:643.00px;top:71.00px;font-size:10px;color:#15428b;-webkit-text-stroke:0.2px #15428b;">検索と</span>
<span class="t" style="transform:scaleX(0.925);left:643.70px;top:79.60px;font-size:10px;color:#15428b;-webkit-text-stroke:0.2px #15428b;">選択</span>
<svg style="left:664.40px;top:83.91px" width="4.20" height="2.52" viewBox="0 0 5 3"><path d="M0 0H5L2.5 3z" fill="#6d90c6"/></svg>
<div class="a" style="left:0px;top:106.8px;width:700px;height:19px;background:linear-gradient(#cfe0f5,#c3d8f2);"></div>
<div class="a" style="left:3.5px;top:108.8px;width:683px;height:13.4px;background:#fff;border:1px solid #a3bde0;box-sizing:border-box;"></div>
<span class="t" style="transform:scaleX(0.826);left:56.30px;top:111.25px;font-size:9.5px;color:#111;">A1</span>
<svg style="left:124.95px;top:115.43px" width="4.50" height="2.70" viewBox="0 0 5 3"><path d="M0 0H5L2.5 3z" fill="#000"/></svg>
<div class="a" style="left:134.3px;top:109.4px;width:57.2px;height:12.4px;background:linear-gradient(#edf3fb 0,#dbe6f5 40%,#bfd1ec 100%);border:1px solid #9db6da;border-radius:6.5px 0 0 6.5px;box-sizing:border-box;"></div>
<div class="a" style="left:137.2px;top:112.2px;width:6.6px;height:6.6px;border-radius:50%;background:radial-gradient(circle at 40% 35%,#d9dde6,#8f98aa);box-shadow:0 0 0 0.8px #c9d3e3;"></div>
<span class="t" style="left:178.80px;top:110.15px;font-size:10.5px;color:#4a4a4a;font-family:'Liberation Serif',serif;font-style:italic;font-weight:bold;letter-spacing:-0.3px;">fx</span>
<div class="a" style="left:687px;top:109.4px;width:9.2px;height:12.6px;background:linear-gradient(#eef3fb,#c9d9ef);border:1px solid #9db6da;box-sizing:border-box;border-radius:1.5px;"></div>
<svg style="left:689px;top:111.4px" width="6" height="9"><path d="M0.6 0.6L2.700 3.200L4.800 0.600M0.600 4.400L2.700 7L4.800 4.400" fill="none" stroke="#1a1a1a" stroke-width="1.300"/></svg>
<div class="a" style="left:3.5px;top:122.4px;width:693px;height:0.9px;background:#93b3de;"></div>
<div class="a" style="left:3.5px;top:123.3px;width:693px;height:2.4px;background:#e6eef9;"></div>
<div class="a" style="left:3.5px;top:125.5px;width:683px;height:381px;background:#fff;"></div>
<div class="a" style="left:3.5px;top:125.5px;width:683px;height:11px;background:linear-gradient(#f4f7fb 0,#e7edf5 40%,#d7e0ed 100%);border-bottom:1px solid #9eb6ce;box-sizing:border-box;"></div>
<div class="a" style="left:3.5px;top:125.5px;width:18.2px;height:11px;background:linear-gradient(#c5d5eb,#b3c7e2);border-right:1px solid #9eb6ce;border-bottom:1px solid #9eb6ce;box-sizing:border-box;"></div>
<svg style="left:13.5px;top:128px" width="6.500" height="6.500"><path d="M6.500 0V6.500H0z" fill="#e6edf6"/></svg>
<div class="a" style="left:21.7px;top:125.5px;width:46.2px;height:11px;background:linear-gradient(#fbdca6 0,#f8cd80 50%,#f4bf60 100%);border-bottom:1px solid #f29536;border-right:1px solid #d8a860;box-sizing:border-box;"></div>
<span class="c" style="left:21.70px;width:46.20px;top:127.20px;font-size:10.2px;color:#3b3b3b;transform:scaleX(0.84);">A</span>
<span class="c" style="left:67.90px;width:17.80px;top:127.20px;font-size:10.2px;color:#2f4850;transform:scaleX(0.84);">B</span>
<div class="a" style="left:84.8px;top:125.7px;width:0.9px;height:10.6px;background:#a6bbd6;"></div>
<span class="c" style="left:85.70px;width:44.90px;top:127.20px;font-size:10.2px;color:#2f4850;transform:scaleX(0.84);">C</span>
<div class="a" style="left:129.7px;top:125.7px;width:0.9px;height:10.6px;background:#a6bbd6;"></div>
<span class="c" style="left:130.60px;width:45.70px;top:127.20px;font-size:10.2px;color:#2f4850;transform:scaleX(0.84);">D</span>
<div class="a" style="left:175.4px;top:125.7px;width:0.9px;height:10.6px;background:#a6bbd6;"></div>
<span class="c" style="left:176.30px;width:45.70px;top:127.20px;font-size:10.2px;color:#2f4850;transform:scaleX(0.84);">E</span>
<div class="a" style="left:221.1px;top:125.7px;width:0.9px;height:10.6px;background:#a6bbd6;"></div>
<span class="c" style="left:222.00px;width:48.70px;top:127.20px;font-size:10.2px;color:#2f4850;transform:scaleX(0.84);">F</span>
<div class="a" style="left:269.8px;top:125.7px;width:0.9px;height:10.6px;background:#a6bbd6;"></div>
<span class="c" style="left:270.70px;width:53.10px;top:127.20px;font-size:10.2px;color:#2f4850;transform:scaleX(0.84);">G</span>
<div class="a" style="left:322.90000000000003px;top:125.7px;width:0.9px;height:10.6px;background:#a6bbd6;"></div>
<span class="c" style="left:323.80px;width:44.80px;top:127.20px;font-size:10.2px;color:#2f4850;transform:scaleX(0.84);">H</span>
<div class="a" style="left:367.70000000000005px;top:125.7px;width:0.9px;height:10.6px;background:#a6bbd6;"></div>
<span class="c" style="left:368.60px;width:45.70px;top:127.20px;font-size:10.2px;color:#2f4850;transform:scaleX(0.84);">I</span>
<div class="a" style="left:413.40000000000003px;top:125.7px;width:0.9px;height:10.6px;background:#a6bbd6;"></div>
<span class="c" style="left:414.30px;width:45.10px;top:127.20px;font-size:10.2px;color:#2f4850;transform:scaleX(0.84);">J</span>
<div class="a" style="left:458.5px;top:125.7px;width:0.9px;height:10.6px;background:#a6bbd6;"></div>
<span class="c" style="left:459.40px;width:45.30px;top:127.20px;font-size:10.2px;color:#2f4850;transform:scaleX(0.84);">K</span>
<div class="a" style="left:503.8px;top:125.7px;width:0.9px;height:10.6px;background:#a6bbd6;"></div>
<span class="c" style="left:504.70px;width:45.30px;top:127.20px;font-size:10.2px;color:#2f4850;transform:scaleX(0.84);">L</span>
<div class="a" style="left:549.1px;top:125.7px;width:0.9px;height:10.6px;background:#a6bbd6;"></div>
<span class="c" style="left:550.00px;width:45.30px;top:127.20px;font-size:10.2px;color:#2f4850;transform:scaleX(0.84);">M</span>
<div class="a" style="left:594.4px;top:125.7px;width:0.9px;height:10.6px;background:#a6bbd6;"></div>
<span class="c" style="left:595.30px;width:45.40px;top:127.20px;font-size:10.2px;color:#2f4850;transform:scaleX(0.84);">N</span>
<div class="a" style="left:639.8000000000001px;top:125.7px;width:0.9px;height:10.6px;background:#a6bbd6;"></div>
<span class="c" style="left:640.70px;width:45.60px;top:127.20px;font-size:10.2px;color:#2f4850;transform:scaleX(0.84);">O</span>
<div class="a" style="left:685.4px;top:125.7px;width:0.9px;height:10.6px;background:#a6bbd6;"></div>
<div class="a" style="left:3.5px;top:136.4px;width:18.2px;height:369.27px;background:#e4ecf7;border-right:1px solid #9eb6ce;box-sizing:border-box;"></div>
<div class="a" style="left:3.5px;top:136.4px;width:18.2px;height:11.19px;background:linear-gradient(90deg,#fbd8a0,#f7c672);border-bottom:1px solid #f29536;border-right:1px solid #f29536;box-sizing:border-box;"></div>
<span class="c" style="left:3.50px;width:17.70px;top:138.30px;font-size:10.2px;color:#2f4850;transform:scaleX(0.8);">1</span>
<div class="a" style="left:3.5px;top:157.88px;width:17.5px;height:0.9px;background:#b4c8e0;"></div>
<span class="c" style="left:3.50px;width:17.70px;top:149.49px;font-size:10.2px;color:#2f4850;transform:scaleX(0.8);">2</span>
<div class="a" style="left:3.5px;top:169.07px;width:17.5px;height:0.9px;background:#b4c8e0;"></div>
<span class="c" style="left:3.50px;width:17.70px;top:160.68px;font-size:10.2px;color:#2f4850;transform:scaleX(0.8);">3</span>
<div class="a" style="left:3.5px;top:180.26px;width:17.5px;height:0.9px;background:#b4c8e0;"></div>
<span class="c" style="left:3.50px;width:17.70px;top:171.87px;font-size:10.2px;color:#2f4850;transform:scaleX(0.8);">4</span>
<div class="a" style="left:3.5px;top:191.45px;width:17.5px;height:0.9px;background:#b4c8e0;"></div>
<span class="c" style="left:3.50px;width:17.70px;top:183.06px;font-size:10.2px;color:#2f4850;transform:scaleX(0.8);">5</span>
<div class="a" style="left:3.5px;top:202.64px;width:17.5px;height:0.9px;background:#b4c8e0;"></div>
<span class="c" style="left:3.50px;width:17.70px;top:194.25px;font-size:10.2px;color:#2f4850;transform:scaleX(0.8);">6</span>
<div class="a" style="left:3.5px;top:213.83px;width:17.5px;height:0.9px;background:#b4c8e0;"></div>
<span class="c" style="left:3.50px;width:17.70px;top:205.44px;font-size:10.2px;color:#2f4850;transform:scaleX(0.8);">7</span>
<div class="a" style="left:3.5px;top:225.02px;width:17.5px;height:0.9px;background:#b4c8e0;"></div>
<span class="c" style="left:3.50px;width:17.70px;top:216.63px;font-size:10.2px;color:#2f4850;transform:scaleX(0.8);">8</span>
<div class="a" style="left:3.5px;top:236.21px;width:17.5px;height:0.9px;background:#b4c8e0;"></div>
<span class="c" style="left:3.50px;width:17.70px;top:227.82px;font-size:10.2px;color:#2f4850;transform:scaleX(0.8);">9</span>
<div class="a" style="left:3.5px;top:247.4px;width:17.5px;height:0.9px;background:#b4c8e0;"></div>
<span class="c" style="left:3.50px;width:17.70px;top:239.01px;font-size:10.2px;color:#2f4850;transform:scaleX(0.8);">10</span>
<div class="a" style="left:3.5px;top:258.59000000000003px;width:17.5px;height:0.9px;background:#b4c8e0;"></div>
<span class="c" style="left:3.50px;width:17.70px;top:250.20px;font-size:10.2px;color:#2f4850;transform:scaleX(0.8);">11</span>
<div class="a" style="left:3.5px;top:269.78000000000003px;width:17.5px;height:0.9px;background:#b4c8e0;"></div>
<span class="c" style="left:3.50px;width:17.70px;top:261.38px;font-size:10.2px;color:#2f4850;transform:scaleX(0.8);">12</span>
<div class="a" style="left:3.5px;top:280.97px;width:17.5px;height:0.9px;background:#b4c8e0;"></div>
<span class="c" style="left:3.50px;width:17.70px;top:272.57px;font-size:10.2px;color:#2f4850;transform:scaleX(0.8);">13</span>
<div class="a" style="left:3.5px;top:292.16px;width:17.5px;height:0.9px;background:#b4c8e0;"></div>
<span class="c" style="left:3.50px;width:17.70px;top:283.76px;font-size:10.2px;color:#2f4850;transform:scaleX(0.8);">14</span>
<div class="a" style="left:3.5px;top:303.35px;width:17.5px;height:0.9px;background:#b4c8e0;"></div>
<span class="c" style="left:3.50px;width:17.70px;top:294.95px;font-size:10.2px;color:#2f4850;transform:scaleX(0.8);">15</span>
<div class="a" style="left:3.5px;top:314.54px;width:17.5px;height:0.9px;background:#b4c8e0;"></div>
<span class="c" style="left:3.50px;width:17.70px;top:306.14px;font-size:10.2px;color:#2f4850;transform:scaleX(0.8);">16</span>
<div class="a" style="left:3.5px;top:325.73px;width:17.5px;height:0.9px;background:#b4c8e0;"></div>
<span class="c" style="left:3.50px;width:17.70px;top:317.33px;font-size:10.2px;color:#2f4850;transform:scaleX(0.8);">17</span>
<div class="a" style="left:3.5px;top:336.92px;width:17.5px;height:0.9px;background:#b4c8e0;"></div>
<span class="c" style="left:3.50px;width:17.70px;top:328.52px;font-size:10.2px;color:#2f4850;transform:scaleX(0.8);">18</span>
<div class="a" style="left:3.5px;top:348.11px;width:17.5px;height:0.9px;background:#b4c8e0;"></div>
<span class="c" style="left:3.50px;width:17.70px;top:339.71px;font-size:10.2px;color:#2f4850;transform:scaleX(0.8);">19</span>
<div class="a" style="left:3.5px;top:359.3px;width:17.5px;height:0.9px;background:#b4c8e0;"></div>
<span class="c" style="left:3.50px;width:17.70px;top:350.90px;font-size:10.2px;color:#2f4850;transform:scaleX(0.8);">20</span>
<div class="a" style="left:3.5px;top:370.49px;width:17.5px;height:0.9px;background:#b4c8e0;"></div>
<span class="c" style="left:3.50px;width:17.70px;top:362.09px;font-size:10.2px;color:#2f4850;transform:scaleX(0.8);">21</span>
<div class="a" style="left:3.5px;top:381.68px;width:17.5px;height:0.9px;background:#b4c8e0;"></div>
<span class="c" style="left:3.50px;width:17.70px;top:373.28px;font-size:10.2px;color:#2f4850;transform:scaleX(0.8);">22</span>
<div class="a" style="left:3.5px;top:392.87px;width:17.5px;height:0.9px;background:#b4c8e0;"></div>
<span class="c" style="left:3.50px;width:17.70px;top:384.47px;font-size:10.2px;color:#2f4850;transform:scaleX(0.8);">23</span>
<div class="a" style="left:3.5px;top:404.06px;width:17.5px;height:0.9px;background:#b4c8e0;"></div>
<span class="c" style="left:3.50px;width:17.70px;top:395.66px;font-size:10.2px;color:#2f4850;transform:scaleX(0.8);">24</span>
<div class="a" style="left:3.5px;top:415.25000000000006px;width:17.5px;height:0.9px;background:#b4c8e0;"></div>
<span class="c" style="left:3.50px;width:17.70px;top:406.86px;font-size:10.2px;color:#2f4850;transform:scaleX(0.8);">25</span>
<div class="a" style="left:3.5px;top:426.44px;width:17.5px;height:0.9px;background:#b4c8e0;"></div>
<span class="c" style="left:3.50px;width:17.70px;top:418.04px;font-size:10.2px;color:#2f4850;transform:scaleX(0.8);">26</span>
<div class="a" style="left:3.5px;top:437.63000000000005px;width:17.5px;height:0.9px;background:#b4c8e0;"></div>
<span class="c" style="left:3.50px;width:17.70px;top:429.24px;font-size:10.2px;color:#2f4850;transform:scaleX(0.8);">27</span>
<div class="a" style="left:3.5px;top:448.82px;width:17.5px;height:0.9px;background:#b4c8e0;"></div>
<span class="c" style="left:3.50px;width:17.70px;top:440.42px;font-size:10.2px;color:#2f4850;transform:scaleX(0.8);">28</span>
<div class="a" style="left:3.5px;top:460.01000000000005px;width:17.5px;height:0.9px;background:#b4c8e0;"></div>
<span class="c" style="left:3.50px;width:17.70px;top:451.62px;font-size:10.2px;color:#2f4850;transform:scaleX(0.8);">29</span>
<div class="a" style="left:3.5px;top:471.2px;width:17.5px;height:0.9px;background:#b4c8e0;"></div>
<span class="c" style="left:3.50px;width:17.70px;top:462.80px;font-size:10.2px;color:#2f4850;transform:scaleX(0.8);">30</span>
<div class="a" style="left:3.5px;top:482.39000000000004px;width:17.5px;height:0.9px;background:#b4c8e0;"></div>
<span class="c" style="left:3.50px;width:17.70px;top:474.00px;font-size:10.2px;color:#2f4850;transform:scaleX(0.8);">31</span>
<div class="a" style="left:3.5px;top:493.58px;width:17.5px;height:0.9px;background:#b4c8e0;"></div>
<span class="c" style="left:3.50px;width:17.70px;top:485.18px;font-size:10.2px;color:#2f4850;transform:scaleX(0.8);">32</span>
<div class="a" style="left:3.5px;top:504.77000000000004px;width:17.5px;height:0.9px;background:#b4c8e0;"></div>
<span class="c" style="left:3.50px;width:17.70px;top:496.38px;font-size:10.2px;color:#2f4850;transform:scaleX(0.8);">33</span>
<div class="a" style="left:21.7px;top:146.99px;width:664.5999999999999px;height:0.8px;background:#d0d7e5;"></div>
<div class="a" style="left:21.7px;top:158.18px;width:664.5999999999999px;height:0.8px;background:#d0d7e5;"></div>
<div class="a" style="left:21.7px;top:169.37px;width:664.5999999999999px;height:0.8px;background:#d0d7e5;"></div>
<div class="a" style="left:21.7px;top:180.56px;width:664.5999999999999px;height:0.8px;background:#d0d7e5;"></div>
<div class="a" style="left:21.7px;top:191.75px;width:664.5999999999999px;height:0.8px;background:#d0d7e5;"></div>
<div class="a" style="left:21.7px;top:202.94000000000003px;width:664.5999999999999px;height:0.8px;background:#d0d7e5;"></div>
<div class="a" style="left:21.7px;top:214.13000000000002px;width:664.5999999999999px;height:0.8px;background:#d0d7e5;"></div>
<div class="a" style="left:21.7px;top:225.32000000000002px;width:664.5999999999999px;height:0.8px;background:#d0d7e5;"></div>
<div class="a" style="left:21.7px;top:236.51000000000002px;width:664.5999999999999px;height:0.8px;background:#d0d7e5;"></div>
<div class="a" style="left:21.7px;top:247.70000000000002px;width:664.5999999999999px;height:0.8px;background:#d0d7e5;"></div>
<div class="a" style="left:21.7px;top:258.89px;width:664.5999999999999px;height:0.8px;background:#d0d7e5;"></div>
<div class="a" style="left:21.7px;top:270.08px;width:664.5999999999999px;height:0.8px;background:#d0d7e5;"></div>
<div class="a" style="left:21.7px;top:281.27px;width:664.5999999999999px;height:0.8px;background:#d0d7e5;"></div>
<div class="a" style="left:21.7px;top:292.46px;width:664.5999999999999px;height:0.8px;background:#d0d7e5;"></div>
<div class="a" style="left:21.7px;top:303.65px;width:664.5999999999999px;height:0.8px;background:#d0d7e5;"></div>
<div class="a" style="left:21.7px;top:314.84px;width:664.5999999999999px;height:0.8px;background:#d0d7e5;"></div>
<div class="a" style="left:21.7px;top:326.03px;width:664.5999999999999px;height:0.8px;background:#d0d7e5;"></div>
<div class="a" style="left:21.7px;top:337.21999999999997px;width:664.5999999999999px;height:0.8px;background:#d0d7e5;"></div>
<div class="a" style="left:21.7px;top:348.40999999999997px;width:664.5999999999999px;height:0.8px;background:#d0d7e5;"></div>
<div class="a" style="left:21.7px;top:359.59999999999997px;width:664.5999999999999px;height:0.8px;background:#d0d7e5;"></div>
<div class="a" style="left:21.7px;top:370.78999999999996px;width:664.5999999999999px;height:0.8px;background:#d0d7e5;"></div>
<div class="a" style="left:21.7px;top:381.97999999999996px;width:664.5999999999999px;height:0.8px;background:#d0d7e5;"></div>
<div class="a" style="left:21.7px;top:393.16999999999996px;width:664.5999999999999px;height:0.8px;background:#d0d7e5;"></div>
<div class="a" style="left:21.7px;top:404.36px;width:664.5999999999999px;height:0.8px;background:#d0d7e5;"></div>
<div class="a" style="left:21.7px;top:415.54999999999995px;width:664.5999999999999px;height:0.8px;background:#d0d7e5;"></div>
<div class="a" style="left:21.7px;top:426.74px;width:664.5999999999999px;height:0.8px;background:#d0d7e5;"></div>
<div class="a" style="left:21.7px;top:437.92999999999995px;width:664.5999999999999px;height:0.8px;background:#d0d7e5;"></div>
<div class="a" style="left:21.7px;top:449.12px;width:664.5999999999999px;height:0.8px;background:#d0d7e5;"></div>
<div class="a" style="left:21.7px;top:460.30999999999995px;width:664.5999999999999px;height:0.8px;background:#d0d7e5;"></div>
<div class="a" style="left:21.7px;top:471.5px;width:664.5999999999999px;height:0.8px;background:#d0d7e5;"></div>
<div class="a" style="left:21.7px;top:482.68999999999994px;width:664.5999999999999px;height:0.8px;background:#d0d7e5;"></div>
<div class="a" style="left:21.7px;top:493.88px;width:664.5999999999999px;height:0.8px;background:#d0d7e5;"></div>
<div class="a" style="left:21.7px;top:505.06999999999994px;width:664.5999999999999px;height:0.8px;background:#d0d7e5;"></div>
<div class="a" style="left:67.30000000000001px;top:136.4px;width:0.8px;height:369.27px;background:#d0d7e5;"></div>
<div class="a" style="left:85.10000000000001px;top:136.4px;width:0.8px;height:369.27px;background:#d0d7e5;"></div>
<div class="a" style="left:130.0px;top:136.4px;width:0.8px;height:369.27px;background:#d0d7e5;"></div>
<div class="a" style="left:175.70000000000002px;top:136.4px;width:0.8px;height:369.27px;background:#d0d7e5;"></div>
<div class="a" style="left:221.4px;top:136.4px;width:0.8px;height:369.27px;background:#d0d7e5;"></div>
<div class="a" style="left:270.09999999999997px;top:136.4px;width:0.8px;height:369.27px;background:#d0d7e5;"></div>
<div class="a" style="left:323.2px;top:136.4px;width:0.8px;height:369.27px;background:#d0d7e5;"></div>
<div class="a" style="left:368.0px;top:136.4px;width:0.8px;height:369.27px;background:#d0d7e5;"></div>
<div class="a" style="left:413.7px;top:136.4px;width:0.8px;height:369.27px;background:#d0d7e5;"></div>
<div class="a" style="left:458.79999999999995px;top:136.4px;width:0.8px;height:369.27px;background:#d0d7e5;"></div>
<div class="a" style="left:504.09999999999997px;top:136.4px;width:0.8px;height:369.27px;background:#d0d7e5;"></div>
<div class="a" style="left:549.4px;top:136.4px;width:0.8px;height:369.27px;background:#d0d7e5;"></div>
<div class="a" style="left:594.6999999999999px;top:136.4px;width:0.8px;height:369.27px;background:#d0d7e5;"></div>
<div class="a" style="left:640.1px;top:136.4px;width:0.8px;height:369.27px;background:#d0d7e5;"></div>
<div class="a" style="left:685.6999999999999px;top:136.4px;width:0.8px;height:369.27px;background:#d0d7e5;"></div>
<div class="a" style="left:67.9px;top:147.59px;width:255.9px;height:11.19px;background:#ffff00;"></div>
<span class="t" style="transform:scaleX(0.855);left:69.40px;top:148.98px;font-size:9.6px;color:#000;">ID</span>
<span class="t" style="transform:scaleX(0.890);left:87.20px;top:148.78px;font-size:10px;color:#000;-webkit-text-stroke:0.3px #000;">品番</span>
<span class="t" style="transform:scaleX(0.883);left:132.10px;top:148.78px;font-size:10px;color:#000;-webkit-text-stroke:0.3px #000;">製品名</span>
<span class="t" style="transform:scaleX(0.885);left:177.80px;top:148.78px;font-size:10px;color:#000;-webkit-text-stroke:0.3px #000;">価格</span>
<span class="t" style="transform:scaleX(0.857);left:223.50px;top:148.78px;font-size:10px;color:#000;-webkit-text-stroke:0.3px #000;">作成日</span>
<span class="t" style="transform:scaleX(0.857);left:272.20px;top:148.78px;font-size:10px;color:#000;-webkit-text-stroke:0.3px #000;">更新日</span>
<span class="t" style="right:616.8px;top:161.18px;font-size:10px;color:#1c1c1c;transform-origin:100% 50%;transform:scaleX(0.78)">1</span>
<span class="t" style="left:87.50px;top:161.08px;font-size:10.2px;color:#1c1c1c;transform:scaleX(0.76);">A00001</span>
<span class="t" style="left:132.40px;top:161.08px;font-size:10.2px;color:#1c1c1c;transform:scaleX(0.8);-webkit-text-stroke:0.2px #222;">製品A1</span>
<span class="t" style="right:480.5px;top:161.18px;font-size:10px;color:#1c1c1c;transform-origin:100% 50%;transform:scaleX(0.78)">5000</span>
<span class="t" style="right:431.8px;top:161.18px;font-size:10px;color:#1c1c1c;transform-origin:100% 50%;transform:scaleX(0.86)">2010/1/1</span>
<span class="t" style="right:378.7px;top:161.18px;font-size:10px;color:#1c1c1c;transform-origin:100% 50%;transform:scaleX(0.86)">2010/2/10</span>
<span class="t" style="right:616.8px;top:172.37px;font-size:10px;color:#1c1c1c;transform-origin:100% 50%;transform:scaleX(0.78)">2</span>
<span class="t" style="left:87.50px;top:172.27px;font-size:10.2px;color:#1c1c1c;transform:scaleX(0.76);">A00002</span>
<span class="t" style="left:132.40px;top:172.27px;font-size:10.2px;color:#1c1c1c;transform:scaleX(0.8);-webkit-text-stroke:0.2px #222;">製品A2</span>
<span class="t" style="right:480.5px;top:172.37px;font-size:10px;color:#1c1c1c;transform-origin:100% 50%;transform:scaleX(0.78)">10000</span>
<span class="t" style="right:431.8px;top:172.37px;font-size:10px;color:#1c1c1c;transform-origin:100% 50%;transform:scaleX(0.86)">2010/1/1</span>
<span class="t" style="right:378.7px;top:172.37px;font-size:10px;color:#1c1c1c;transform-origin:100% 50%;transform:scaleX(0.86)">2010/2/10</span>
<span class="t" style="right:616.8px;top:183.56px;font-size:10px;color:#1c1c1c;transform-origin:100% 50%;transform:scaleX(0.78)">3</span>
<span class="t" style="left:87.50px;top:183.46px;font-size:10.2px;color:#1c1c1c;transform:scaleX(0.76);">A00003</span>
<span class="t" style="left:132.40px;top:183.46px;font-size:10.2px;color:#1c1c1c;transform:scaleX(0.8);-webkit-text-stroke:0.2px #222;">製品A3</span>
<span class="t" style="right:480.5px;top:183.56px;font-size:10px;color:#1c1c1c;transform-origin:100% 50%;transform:scaleX(0.78)">15000</span>
<span class="t" style="right:431.8px;top:183.56px;font-size:10px;color:#1c1c1c;transform-origin:100% 50%;transform:scaleX(0.86)">2010/1/1</span>
<span class="t" style="right:378.7px;top:183.56px;font-size:10px;color:#1c1c1c;transform-origin:100% 50%;transform:scaleX(0.86)">2010/2/10</span>
<span class="t" style="right:616.8px;top:194.75px;font-size:10px;color:#1c1c1c;transform-origin:100% 50%;transform:scaleX(0.78)">4</span>
<span class="t" style="left:87.50px;top:194.65px;font-size:10.2px;color:#1c1c1c;transform:scaleX(0.76);">A00004</span>
<span class="t" style="left:132.40px;top:194.65px;font-size:10.2px;color:#1c1c1c;transform:scaleX(0.8);-webkit-text-stroke:0.2px #222;">製品A4</span>
<span class="t" style="right:480.5px;top:194.75px;font-size:10px;color:#1c1c1c;transform-origin:100% 50%;transform:scaleX(0.78)">20000</span>
<span class="t" style="right:431.8px;top:194.75px;font-size:10px;color:#1c1c1c;transform-origin:100% 50%;transform:scaleX(0.86)">2010/1/1</span>
<span class="t" style="right:378.7px;top:194.75px;font-size:10px;color:#1c1c1c;transform-origin:100% 50%;transform:scaleX(0.86)">2010/2/10</span>
<span class="t" style="right:616.8px;top:205.94px;font-size:10px;color:#1c1c1c;transform-origin:100% 50%;transform:scaleX(0.78)">5</span>
<span class="t" style="left:87.50px;top:205.84px;font-size:10.2px;color:#1c1c1c;transform:scaleX(0.76);">A00005</span>
<span class="t" style="left:132.40px;top:205.84px;font-size:10.2px;color:#1c1c1c;transform:scaleX(0.8);-webkit-text-stroke:0.2px #222;">製品A5</span>
<span class="t" style="right:480.5px;top:205.94px;font-size:10px;color:#1c1c1c;transform-origin:100% 50%;transform:scaleX(0.78)">25000</span>
<span class="t" style="right:431.8px;top:205.94px;font-size:10px;color:#1c1c1c;transform-origin:100% 50%;transform:scaleX(0.86)">2010/1/1</span>
<span class="t" style="right:378.7px;top:205.94px;font-size:10px;color:#1c1c1c;transform-origin:100% 50%;transform:scaleX(0.86)">2010/2/10</span>
<span class="t" style="right:616.8px;top:217.13px;font-size:10px;color:#1c1c1c;transform-origin:100% 50%;transform:scaleX(0.78)">6</span>
<span class="t" style="left:87.50px;top:217.03px;font-size:10.2px;color:#1c1c1c;transform:scaleX(0.76);">B00001</span>
<span class="t" style="left:132.40px;top:217.03px;font-size:10.2px;color:#1c1c1c;transform:scaleX(0.8);-webkit-text-stroke:0.2px #222;">製品B1</span>
<span class="t" style="right:480.5px;top:217.13px;font-size:10px;color:#1c1c1c;transform-origin:100% 50%;transform:scaleX(0.78)">30000</span>
<span class="t" style="right:431.8px;top:217.13px;font-size:10px;color:#1c1c1c;transform-origin:100% 50%;transform:scaleX(0.86)">2010/1/1</span>
<span class="t" style="right:378.7px;top:217.13px;font-size:10px;color:#1c1c1c;transform-origin:100% 50%;transform:scaleX(0.86)">2010/2/10</span>
<span class="t" style="right:616.8px;top:228.32px;font-size:10px;color:#1c1c1c;transform-origin:100% 50%;transform:scaleX(0.78)">7</span>
<span class="t" style="left:87.50px;top:228.22px;font-size:10.2px;color:#1c1c1c;transform:scaleX(0.76);">B00002</span>
<span class="t" style="left:132.40px;top:228.22px;font-size:10.2px;color:#1c1c1c;transform:scaleX(0.8);-webkit-text-stroke:0.2px #222;">製品B2</span>
<span class="t" style="right:480.5px;top:228.32px;font-size:10px;color:#1c1c1c;transform-origin:100% 50%;transform:scaleX(0.78)">35000</span>
<span class="t" style="right:431.8px;top:228.32px;font-size:10px;color:#1c1c1c;transform-origin:100% 50%;transform:scaleX(0.86)">2010/1/1</span>
<span class="t" style="right:378.7px;top:228.32px;font-size:10px;color:#1c1c1c;transform-origin:100% 50%;transform:scaleX(0.86)">2010/2/10</span>
<span class="t" style="right:616.8px;top:239.51px;font-size:10px;color:#1c1c1c;transform-origin:100% 50%;transform:scaleX(0.78)">8</span>
<span class="t" style="left:87.50px;top:239.41px;font-size:10.2px;color:#1c1c1c;transform:scaleX(0.76);">B00003</span>
<span class="t" style="left:132.40px;top:239.41px;font-size:10.2px;color:#1c1c1c;transform:scaleX(0.8);-webkit-text-stroke:0.2px #222;">製品B3</span>
<span class="t" style="right:480.5px;top:239.51px;font-size:10px;color:#1c1c1c;transform-origin:100% 50%;transform:scaleX(0.78)">40000</span>
<span class="t" style="right:431.8px;top:239.51px;font-size:10px;color:#1c1c1c;transform-origin:100% 50%;transform:scaleX(0.86)">2010/1/1</span>
<span class="t" style="right:378.7px;top:239.51px;font-size:10px;color:#1c1c1c;transform-origin:100% 50%;transform:scaleX(0.86)">2010/2/10</span>
<span class="t" style="right:616.8px;top:250.70px;font-size:10px;color:#1c1c1c;transform-origin:100% 50%;transform:scaleX(0.78)">9</span>
<span class="t" style="left:87.50px;top:250.60px;font-size:10.2px;color:#1c1c1c;transform:scaleX(0.76);">B00004</span>
<span class="t" style="left:132.40px;top:250.60px;font-size:10.2px;color:#1c1c1c;transform:scaleX(0.8);-webkit-text-stroke:0.2px #222;">製品B4</span>
<span class="t" style="right:480.5px;top:250.70px;font-size:10px;color:#1c1c1c;transform-origin:100% 50%;transform:scaleX(0.78)">45000</span>
<span class="t" style="right:431.8px;top:250.70px;font-size:10px;color:#1c1c1c;transform-origin:100% 50%;transform:scaleX(0.86)">2010/1/1</span>
<span class="t" style="right:378.7px;top:250.70px;font-size:10px;color:#1c1c1c;transform-origin:100% 50%;transform:scaleX(0.86)">2010/2/10</span>
<span class="t" style="right:616.8px;top:261.89px;font-size:10px;color:#1c1c1c;transform-origin:100% 50%;transform:scaleX(0.78)">10</span>
<span class="t" style="left:87.50px;top:261.79px;font-size:10.2px;color:#1c1c1c;transform:scaleX(0.76);">B00005</span>
<span class="t" style="left:132.40px;top:261.79px;font-size:10.2px;color:#1c1c1c;transform:scaleX(0.8);-webkit-text-stroke:0.2px #222;">製品B5</span>
<span class="t" style="right:480.5px;top:261.89px;font-size:10px;color:#1c1c1c;transform-origin:100% 50%;transform:scaleX(0.78)">50000</span>
<span class="t" style="right:431.8px;top:261.89px;font-size:10px;color:#1c1c1c;transform-origin:100% 50%;transform:scaleX(0.86)">2010/1/1</span>
<span class="t" style="right:378.7px;top:261.89px;font-size:10px;color:#1c1c1c;transform-origin:100% 50%;transform:scaleX(0.86)">2010/2/10</span>
<span class="t" style="right:616.8px;top:273.08px;font-size:10px;color:#1c1c1c;transform-origin:100% 50%;transform:scaleX(0.78)">11</span>
<span class="t" style="left:87.50px;top:272.98px;font-size:10.2px;color:#1c1c1c;transform:scaleX(0.76);">C00001</span>
<span class="t" style="left:132.40px;top:272.98px;font-size:10.2px;color:#1c1c1c;transform:scaleX(0.8);-webkit-text-stroke:0.2px #222;">製品C1</span>
<span class="t" style="right:480.5px;top:273.08px;font-size:10px;color:#1c1c1c;transform-origin:100% 50%;transform:scaleX(0.78)">5000</span>
<span class="t" style="right:431.8px;top:273.08px;font-size:10px;color:#1c1c1c;transform-origin:100% 50%;transform:scaleX(0.86)">2010/1/1</span>
<span class="t" style="right:378.7px;top:273.08px;font-size:10px;color:#1c1c1c;transform-origin:100% 50%;transform:scaleX(0.86)">2010/3/10</span>
<span class="t" style="right:616.8px;top:284.27px;font-size:10px;color:#1c1c1c;transform-origin:100% 50%;transform:scaleX(0.78)">12</span>
<span class="t" style="left:87.50px;top:284.17px;font-size:10.2px;color:#1c1c1c;transform:scaleX(0.76);">C00002</span>
<span class="t" style="left:132.40px;top:284.17px;font-size:10.2px;color:#1c1c1c;transform:scaleX(0.8);-webkit-text-stroke:0.2px #222;">製品C2</span>
<span class="t" style="right:480.5px;top:284.27px;font-size:10px;color:#1c1c1c;transform-origin:100% 50%;transform:scaleX(0.78)">10000</span>
<span class="t" style="right:431.8px;top:284.27px;font-size:10px;color:#1c1c1c;transform-origin:100% 50%;transform:scaleX(0.86)">2010/1/1</span>
<span class="t" style="right:378.7px;top:284.27px;font-size:10px;color:#1c1c1c;transform-origin:100% 50%;transform:scaleX(0.86)">2010/3/10</span>
<span class="t" style="right:616.8px;top:295.46px;font-size:10px;color:#1c1c1c;transform-origin:100% 50%;transform:scaleX(0.78)">13</span>
<span class="t" style="left:87.50px;top:295.36px;font-size:10.2px;color:#1c1c1c;transform:scaleX(0.76);">C00003</span>
<span class="t" style="left:132.40px;top:295.36px;font-size:10.2px;color:#1c1c1c;transform:scaleX(0.8);-webkit-text-stroke:0.2px #222;">製品C3</span>
<span class="t" style="right:480.5px;top:295.46px;font-size:10px;color:#1c1c1c;transform-origin:100% 50%;transform:scaleX(0.78)">15000</span>
<span class="t" style="right:431.8px;top:295.46px;font-size:10px;color:#1c1c1c;transform-origin:100% 50%;transform:scaleX(0.86)">2010/1/1</span>
<span class="t" style="right:378.7px;top:295.46px;font-size:10px;color:#1c1c1c;transform-origin:100% 50%;transform:scaleX(0.86)">2010/3/10</span>
<span class="t" style="right:616.8px;top:306.65px;font-size:10px;color:#1c1c1c;transform-origin:100% 50%;transform:scaleX(0.78)">14</span>
<span class="t" style="left:87.50px;top:306.55px;font-size:10.2px;color:#1c1c1c;transform:scaleX(0.76);">C00004</span>
<span class="t" style="left:132.40px;top:306.55px;font-size:10.2px;color:#1c1c1c;transform:scaleX(0.8);-webkit-text-stroke:0.2px #222;">製品C4</span>
<span class="t" style="right:480.5px;top:306.65px;font-size:10px;color:#1c1c1c;transform-origin:100% 50%;transform:scaleX(0.78)">20000</span>
<span class="t" style="right:431.8px;top:306.65px;font-size:10px;color:#1c1c1c;transform-origin:100% 50%;transform:scaleX(0.86)">2010/1/1</span>
<span class="t" style="right:378.7px;top:306.65px;font-size:10px;color:#1c1c1c;transform-origin:100% 50%;transform:scaleX(0.86)">2010/3/10</span>
<span class="t" style="right:616.8px;top:317.84px;font-size:10px;color:#1c1c1c;transform-origin:100% 50%;transform:scaleX(0.78)">15</span>
<span class="t" style="left:87.50px;top:317.74px;font-size:10.2px;color:#1c1c1c;transform:scaleX(0.76);">C00005</span>
<span class="t" style="left:132.40px;top:317.74px;font-size:10.2px;color:#1c1c1c;transform:scaleX(0.8);-webkit-text-stroke:0.2px #222;">製品C5</span>
<span class="t" style="right:480.5px;top:317.84px;font-size:10px;color:#1c1c1c;transform-origin:100% 50%;transform:scaleX(0.78)">25000</span>
<span class="t" style="right:431.8px;top:317.84px;font-size:10px;color:#1c1c1c;transform-origin:100% 50%;transform:scaleX(0.86)">2010/1/1</span>
<span class="t" style="right:378.7px;top:317.84px;font-size:10px;color:#1c1c1c;transform-origin:100% 50%;transform:scaleX(0.86)">2010/3/10</span>
<span class="t" style="right:616.8px;top:329.03px;font-size:10px;color:#1c1c1c;transform-origin:100% 50%;transform:scaleX(0.78)">16</span>
<span class="t" style="left:87.50px;top:328.93px;font-size:10.2px;color:#1c1c1c;transform:scaleX(0.76);">D00001</span>
<span class="t" style="left:132.40px;top:328.93px;font-size:10.2px;color:#1c1c1c;transform:scaleX(0.8);-webkit-text-stroke:0.2px #222;">製品D1</span>
<span class="t" style="right:480.5px;top:329.03px;font-size:10px;color:#1c1c1c;transform-origin:100% 50%;transform:scaleX(0.78)">30000</span>
<span class="t" style="right:431.8px;top:329.03px;font-size:10px;color:#1c1c1c;transform-origin:100% 50%;transform:scaleX(0.86)">2010/1/1</span>
<span class="t" style="right:378.7px;top:329.03px;font-size:10px;color:#1c1c1c;transform-origin:100% 50%;transform:scaleX(0.86)">2010/3/10</span>
<span class="t" style="right:616.8px;top:340.22px;font-size:10px;color:#1c1c1c;transform-origin:100% 50%;transform:scaleX(0.78)">17</span>
<span class="t" style="left:87.50px;top:340.12px;font-size:10.2px;color:#1c1c1c;transform:scaleX(0.76);">D00002</span>
<span class="t" style="left:132.40px;top:340.12px;font-size:10.2px;color:#1c1c1c;transform:scaleX(0.8);-webkit-text-stroke:0.2px #222;">製品D2</span>
<span class="t" style="right:480.5px;top:340.22px;font-size:10px;color:#1c1c1c;transform-origin:100% 50%;transform:scaleX(0.78)">35000</span>
<span class="t" style="right:431.8px;top:340.22px;font-size:10px;color:#1c1c1c;transform-origin:100% 50%;transform:scaleX(0.86)">2010/1/1</span>
<span class="t" style="right:378.7px;top:340.22px;font-size:10px;color:#1c1c1c;transform-origin:100% 50%;transform:scaleX(0.86)">2010/3/10</span>
<span class="t" style="right:616.8px;top:351.41px;font-size:10px;color:#1c1c1c;transform-origin:100% 50%;transform:scaleX(0.78)">18</span>
<span class="t" style="left:87.50px;top:351.31px;font-size:10.2px;color:#1c1c1c;transform:scaleX(0.76);">D00003</span>
<span class="t" style="left:132.40px;top:351.31px;font-size:10.2px;color:#1c1c1c;transform:scaleX(0.8);-webkit-text-stroke:0.2px #222;">製品D3</span>
<span class="t" style="right:480.5px;top:351.41px;font-size:10px;color:#1c1c1c;transform-origin:100% 50%;transform:scaleX(0.78)">40000</span>
<span class="t" style="right:431.8px;top:351.41px;font-size:10px;color:#1c1c1c;transform-origin:100% 50%;transform:scaleX(0.86)">2010/1/1</span>
<span class="t" style="right:378.7px;top:351.41px;font-size:10px;color:#1c1c1c;transform-origin:100% 50%;transform:scaleX(0.86)">2010/3/10</span>
<span class="t" style="right:616.8px;top:362.60px;font-size:10px;color:#1c1c1c;transform-origin:100% 50%;transform:scaleX(0.78)">19</span>
<span class="t" style="left:87.50px;top:362.50px;font-size:10.2px;color:#1c1c1c;transform:scaleX(0.76);">D00004</span>
<span class="t" style="left:132.40px;top:362.50px;font-size:10.2px;color:#1c1c1c;transform:scaleX(0.8);-webkit-text-stroke:0.2px #222;">製品D4</span>
<span class="t" style="right:480.5px;top:362.60px;font-size:10px;color:#1c1c1c;transform-origin:100% 50%;transform:scaleX(0.78)">45000</span>
<span class="t" style="right:431.8px;top:362.60px;font-size:10px;color:#1c1c1c;transform-origin:100% 50%;transform:scaleX(0.86)">2010/1/1</span>
<span class="t" style="right:378.7px;top:362.60px;font-size:10px;color:#1c1c1c;transform-origin:100% 50%;transform:scaleX(0.86)">2010/3/10</span>
<span class="t" style="right:616.8px;top:373.79px;font-size:10px;color:#1c1c1c;transform-origin:100% 50%;transform:scaleX(0.78)">20</span>
<span class="t" style="left:87.50px;top:373.69px;font-size:10.2px;color:#1c1c1c;transform:scaleX(0.76);">D00005</span>
<span class="t" style="left:132.40px;top:373.69px;font-size:10.2px;color:#1c1c1c;transform:scaleX(0.8);-webkit-text-stroke:0.2px #222;">製品D5</span>
<span class="t" style="right:480.5px;top:373.79px;font-size:10px;color:#1c1c1c;transform-origin:100% 50%;transform:scaleX(0.78)">50000</span>
<span class="t" style="right:431.8px;top:373.79px;font-size:10px;color:#1c1c1c;transform-origin:100% 50%;transform:scaleX(0.86)">2010/1/1</span>
<span class="t" style="right:378.7px;top:373.79px;font-size:10px;color:#1c1c1c;transform-origin:100% 50%;transform:scaleX(0.86)">2010/3/10</span>
<div class="a" style="left:67.9px;top:146.79px;width:255.9px;height:0.95px;background:#111;"></div>
<div class="a" style="left:67.9px;top:157.98px;width:255.9px;height:0.95px;background:#111;"></div>
<div class="a" style="left:67.9px;top:169.17px;width:255.9px;height:0.95px;background:#111;"></div>
<div class="a" style="left:67.9px;top:180.35999999999999px;width:255.9px;height:0.95px;background:#111;"></div>
<div class="a" style="left:67.9px;top:191.54999999999998px;width:255.9px;height:0.95px;background:#111;"></div>
<div class="a" style="left:67.9px;top:202.74px;width:255.9px;height:0.95px;background:#111;"></div>
<div class="a" style="left:67.9px;top:213.93px;width:255.9px;height:0.95px;background:#111;"></div>
<div class="a" style="left:67.9px;top:225.12px;width:255.9px;height:0.95px;background:#111;"></div>
<div class="a" style="left:67.9px;top:236.31px;width:255.9px;height:0.95px;background:#111;"></div>
<div class="a" style="left:67.9px;top:247.5px;width:255.9px;height:0.95px;background:#111;"></div>
<div class="a" style="left:67.9px;top:258.69px;width:255.9px;height:0.95px;background:#111;"></div>
<div class="a" style="left:67.9px;top:269.88px;width:255.9px;height:0.95px;background:#111;"></div>
<div class="a" style="left:67.9px;top:281.07px;width:255.9px;height:0.95px;background:#111;"></div>
<div class="a" style="left:67.9px;top:292.26px;width:255.9px;height:0.95px;background:#111;"></div>
<div class="a" style="left:67.9px;top:303.45px;width:255.9px;height:0.95px;background:#111;"></div>
<div class="a" style="left:67.9px;top:314.64px;width:255.9px;height:0.95px;background:#111;"></div>
<div class="a" style="left:67.9px;top:325.83px;width:255.9px;height:0.95px;background:#111;"></div>
<div class="a" style="left:67.9px;top:337.02px;width:255.9px;height:0.95px;background:#111;"></div>
<div class="a" style="left:67.9px;top:348.21px;width:255.9px;height:0.95px;background:#111;"></div>
<div class="a" style="left:67.9px;top:359.4px;width:255.9px;height:0.95px;background:#111;"></div>
<div class="a" style="left:67.9px;top:370.59px;width:255.9px;height:0.95px;background:#111;"></div>
<div class="a" style="left:67.9px;top:381.78px;width:255.9px;height:0.95px;background:#111;"></div>
<div class="a" style="left:67.10000000000001px;top:147.59px;width:0.95px;height:234.98999999999998px;background:#111;"></div>
<div class="a" style="left:84.9px;top:147.59px;width:0.95px;height:234.98999999999998px;background:#111;"></div>
<div class="a" style="left:129.79999999999998px;top:147.59px;width:0.95px;height:234.98999999999998px;background:#111;"></div>
<div class="a" style="left:175.5px;top:147.59px;width:0.95px;height:234.98999999999998px;background:#111;"></div>
<div class="a" style="left:221.2px;top:147.59px;width:0.95px;height:234.98999999999998px;background:#111;"></div>
<div class="a" style="left:269.9px;top:147.59px;width:0.95px;height:234.98999999999998px;background:#111;"></div>
<div class="a" style="left:323.0px;top:147.59px;width:0.95px;height:234.98999999999998px;background:#111;"></div>
<div class="a" style="left:21.2px;top:136.4px;width:47.3px;height:1px;background:#1a1714;"></div>
<div class="a" style="left:21.2px;top:136.4px;width:1.2px;height:12.2px;background:#1a1714;"></div>
<div class="a" style="left:66.3px;top:136.4px;width:2.4px;height:8.2px;background:#1a1714;"></div>
<div class="a" style="left:21.2px;top:147.1px;width:43.9px;height:1.6px;background:#1a1714;"></div>
<div class="a" style="left:66px;top:146px;width:3.2px;height:3.4px;background:#1a1714;"></div>
<svg style="left:0;top:0" width="700" height="532"><g stroke="#ff0000" stroke-width="3.6" fill="none"><path d="M67.1 157.2H325.7" stroke-dasharray="3.6 3.87"/><path d="M64.9 383.1H325.7" stroke-dasharray="3.6 3.83"/><path d="M67.3 156.6V384.9" stroke-dasharray="3.6 3.8"/><path d="M323.9 154.7V384.9" stroke-dasharray="3.600 3.840"/></g></svg>
<div class="a" style="left:686.3px;top:125.7px;width:10.2px;height:378.5px;background:linear-gradient(90deg,#8eabdc,#7f9fd2);"></div>
<div class="a" style="left:687.3px;top:127px;width:8.4px;height:2.8px;background:#f1f5fb;border:1px solid #5f7fb5;box-sizing:border-box;border-radius:1px;"></div>
<svg style="left:688.400px;top:134.600px" width="7" height="3.200"><path d="M0 3.200L3.300 0L6.600 3.200z" fill="#3f5588"/></svg>
<div class="a" style="left:687px;top:142.2px;width:9px;height:326.4px;background:linear-gradient(90deg,#f6f8fc,#e3eaf5 40%,#cfdaeb 60%,#d6e0ef);border:1px solid #7f97c0;border-radius:2px;box-sizing:border-box;"></div>
<div class="a" style="left:689.3px;top:303.5px;width:4.4px;height:0.9px;background:#6a80a8;"></div>
<div class="a" style="left:689.3px;top:305.3px;width:4.4px;height:0.9px;background:#6a80a8;"></div>
<div class="a" style="left:689.3px;top:307.1px;width:4.4px;height:0.9px;background:#6a80a8;"></div>
<svg style="left:688.400px;top:496.800px" width="7" height="3.200"><path d="M0 0L3.300 3.200L6.600 0z" fill="#2b3f66"/></svg>
<div class="a" style="left:368.5px;top:148.5px;width:205.5px;height:75.5px;background:#d4d0c8;border:1px solid;border-color:#d4d0c8 #404040 #404040 #d4d0c8;box-sizing:border-box;box-shadow:inset 1px 1px 0 #fff,inset -1px -1px 0 #808080;"></div>
<div class="a" style="left:370.5px;top:150.5px;width:201px;height:13px;background:linear-gradient(90deg,#0a246a,#a6caf0);"></div>
<span class="t" style="transform:scaleX(0.900);left:372.00px;top:152.20px;font-size:10px;color:#fff;font-weight:bold;">読み取り範囲の選択</span>
<div class="a" style="left:545.5px;top:152px;width:11px;height:10px;background:#d4d0c8;border:1px solid;border-color:#fff #404040 #404040 #fff;box-sizing:border-box;box-shadow:inset -1px -1px 0 #808080;"></div>
<div class="a" style="left:558.5px;top:152px;width:11px;height:10px;background:#d4d0c8;border:1px solid;border-color:#fff #404040 #404040 #fff;box-sizing:border-box;box-shadow:inset -1px -1px 0 #808080;"></div>
<span class="t" style="left:548.70px;top:152.50px;font-size:9px;color:#000;font-weight:bold;">?</span>
<svg style="left:561px;top:154px" width="6" height="6"><path d="M0.5 0.5L5.500 5.500M5.500 0.5L0.5 5.500" stroke="#000" stroke-width="1.400"/></svg>
<span class="t" style="transform:scaleX(0.725);left:375.00px;top:167.80px;font-size:10px;color:#000;-webkit-text-stroke:0.2px #000;">読み取り範囲を選択してください。</span>
<div class="a" style="left:374.5px;top:180.5px;width:192.5px;height:12.5px;background:#fff;border:1px solid;border-color:#404040 #fff #fff #404040;box-sizing:border-box;box-shadow:-1px -1px 0 #808080;"></div>
<span class="t" style="transform:scaleX(0.843);left:377.00px;top:182.25px;font-size:9.5px;color:#000;">$B$3:$G$22</span>
<div class="a" style="left:446.2px;top:199.2px;width:62px;height:21.5px;border:2px solid #ff0000;box-sizing:border-box;"></div>
<div class="a" style="left:449px;top:201.5px;width:56.5px;height:16.5px;background:#d4d0c8;border:1px solid #000;box-sizing:border-box;box-shadow:inset 1px 1px 0 #fff,inset -1px -1px 0 #404040,inset -2px -2px 0 #808080;"></div>
<span class="t" style="transform:scaleX(0.874);left:470.00px;top:204.75px;font-size:9.5px;color:#000;">OK</span>
<div class="a" style="left:511.5px;top:201.5px;width:55.5px;height:16px;background:#d4d0c8;border:1px solid;border-color:#fff #404040 #404040 #fff;box-sizing:border-box;box-shadow:inset -1px -1px 0 #808080;"></div>
<span class="t" style="transform:scaleX(0.740);left:520.50px;top:204.50px;font-size:10px;color:#000;-webkit-text-stroke:0.2px #000;">キャンセル</span>
<div class="a" style="left:0px;top:503.9px;width:700px;height:11.4px;background:linear-gradient(#9fbbe6,#95b2e1 60%,#8eacdd 92%,#7f9fd4);"></div>
<div class="a" style="left:0px;top:503.9px;width:700px;height:0.8px;background:#7f9ccd;"></div>
<div class="a" style="left:3px;top:503.9px;width:43.5px;height:11.4px;background:linear-gradient(#c9dcf4 0,#b3cdef 45%,#a3c2ec 50%,#c3d8f3 100%);border-right:1px solid #8fabd6;box-sizing:border-box;"></div>
<svg style="left:6.4px;top:506.09999999999997px" width="36" height="7"><g fill="#2a4c9c" transform="translate(0,0.5) scale(1,0.86)"><rect x="0" y="0" width="1.3" height="6.5"/><path d="M4.7 0V6.5L1.2 3.25z"/><path d="M14.6 0V6.5L11 3.25z"/><path d="M20.8 0V6.5L24.4 3.25z"/><path d="M30.6 0V6.5L34.2 3.25z"/><rect x="34.3" y="0" width="1.3" height="6.5"/></g></svg>
<svg style="left:0;top:0" width="700" height="532"><defs><linearGradient id="tb" x1="0" y1="0" x2="0" y2="1"><stop offset="0" stop-color="#dbe7f7"/><stop offset="1" stop-color="#c3d6f0"/></linearGradient></defs><path d="M173.7 503.9H205.0L196.8 514.6999999999999H173.7z" fill="url(#tb)" stroke="#7f9bc8" stroke-width="0.8"/><path d="M130 503.9H181.89999999999998L173.7 514.6999999999999H130z" fill="url(#tb)" stroke="#7f9bc8" stroke-width="0.8"/><path d="M87.6 503.9H138.2L130 514.6999999999999H87.6z" fill="url(#tb)" stroke="#7f9bc8" stroke-width="0.8"/><path d="M46.5 503.9H95.8L87.6 514.6999999999999H46.5z" fill="#ffffff" stroke="#6f8cbc" stroke-width="0.8"/></svg>
<div class="a" style="left:47px;top:503.4px;width:46px;height:1.2px;background:#fff;"></div>
<span class="t" style="transform:scaleX(0.892);left:53.40px;top:504.60px;font-size:9.8px;color:#1f438f;-webkit-text-stroke:0.2px #1f438f;">Sheet1</span>
<span class="t" style="transform:scaleX(0.927);left:96.00px;top:504.60px;font-size:9.8px;color:#1f438f;-webkit-text-stroke:0.2px #1f438f;">Sheet2</span>
<span class="t" style="transform:scaleX(0.943);left:138.50px;top:504.60px;font-size:9.8px;color:#1f438f;-webkit-text-stroke:0.2px #1f438f;">Sheet3</span>
<svg style="left:181.5px;top:505.09999999999997px" width="10" height="8"><rect x="2.5" y="2.2" width="6.8" height="5" fill="#fff" stroke="#5f7396" stroke-width="0.8"/><path d="M2 0v4M0 2h4M0.6 0.6l2.8 2.8M3.4 0.6L0.6 3.4" stroke="#e8a200" stroke-width="0.9"/></svg>
<div class="a" style="left:411px;top:503.9px;width:275.5px;height:11.4px;background:linear-gradient(#93b0df,#86a5d8);"></div>
<div class="a" style="left:413.4px;top:505.09999999999997px;width:4px;height:9px;background:#f4f7fb;border:1px solid #5f7fb5;box-sizing:border-box;border-radius:1px;"></div>
<svg style="left:421.8px;top:505.9px" width="4" height="7"><path d="M3.6 0V7L0 3.5z" fill="#2b3f66"/></svg>
<div class="a" style="left:429.5px;top:504.7px;width:205px;height:9.9px;background:linear-gradient(#f6f8fc,#dfe7f3 45%,#c9d6ea 55%,#d3deef);border:1px solid #7f97c0;border-radius:2px;box-sizing:border-box;"></div>
<div class="a" style="left:529.8px;top:506.9px;width:0.9px;height:4.6px;background:#6a80a8;"></div>
<div class="a" style="left:531.5999999999999px;top:506.9px;width:0.9px;height:4.6px;background:#6a80a8;"></div>
<div class="a" style="left:533.4px;top:506.9px;width:0.9px;height:4.6px;background:#6a80a8;"></div>
<svg style="left:674px;top:505.9px" width="4" height="7"><path d="M0 0V7L3.6 3.5z" fill="#2b3f66"/></svg>
<div class="a" style="left:681.8px;top:505.09999999999997px;width:3.6px;height:9px;background:#f4f7fb;border:1px solid #5f7fb5;box-sizing:border-box;border-radius:1px;"></div>
<div class="a" style="left:686.3px;top:503.9px;width:10.2px;height:11.4px;background:#8eabdc;"></div>
<div class="a" style="left:0px;top:515.3px;width:700px;height:17px;background:linear-gradient(#e6effc 0,#e0ebfb 1.8px,#d3e3f8 2.2px,#c5d9f5 7.5px,#b1ccf0 8.5px,#b1ccf0 10.5px,#bdd4f3 11.5px,#cbdef7 15px);"></div>
<span class="t" style="transform:scaleX(0.675);left:7.50px;top:518.00px;font-size:10px;color:#15428b;-webkit-text-stroke:0.2px #15428b;">コマンド</span>
<div class="a" style="left:40px;top:517px;width:1px;height:12.5px;background:#9db9de;"></div>
<div class="a" style="left:41px;top:517px;width:1px;height:12.5px;background:#eaf2fc;"></div>
<div class="a" style="left:509px;top:516px;width:191px;height:14.5px;background:linear-gradient(#c9daf2 0,#b5cbec 40%,#9ab7e4 50%,#9fbbe6 80%,#b5cdee 100%);"></div>
<div class="a" style="left:508px;top:516.5px;width:1px;height:13.5px;background:#8fabd6;"></div>
<div class="a" style="left:515px;top:517.3px;width:12px;height:11px;background:linear-gradient(#fde9b5,#f9cf72 50%,#f6bd4a);border:1px solid #c49338;box-sizing:border-box;border-radius:1px;"></div>
<svg style="left:516.8px;top:519.2px" width="9" height="8"><rect x="0.5" y="0.5" width="7.6" height="6.4" fill="#fff" stroke="#6a6258" stroke-width="0.8"/><path d="M0.5 2.7H8M0.5 4.8H8M3 0.5V7M5.5 0.5V7" stroke="#6a6258" stroke-width="0.6"/></svg>
<svg style="left:530.3px;top:518.2px" width="10" height="10"><rect x="0.5" y="0.5" width="8.6" height="8.6" fill="#dfe7f3" stroke="#4a5d80" stroke-width="0.9"/><rect x="2.6" y="2.6" width="4.4" height="4.4" fill="#fff" stroke="#4a5d80" stroke-width="0.8"/></svg>
<svg style="left:544.3px;top:518.2px" width="10" height="10"><rect x="0.5" y="0.5" width="8.6" height="8.6" fill="#dfe7f3" stroke="#4a5d80" stroke-width="0.9"/><path d="M3.4 0.5V6H6V0.5" fill="#fff" stroke="#4a5d80" stroke-width="0.8"/></svg>
<span class="t" style="transform:scaleX(0.726);left:562.00px;top:518.05px;font-size:9.5px;color:#12306e;-webkit-text-stroke:0.25px #12306e;">85%</span>
<div class="a" style="left:594px;top:522.2px;width:77px;height:1px;background:#5f78a6;"></div>
<div class="a" style="left:594px;top:523.2px;width:77px;height:1px;background:#dfeafa;"></div>
<svg style="left:582.3px;top:516.7px" width="12" height="12"><circle cx="5.8" cy="5.8" r="5" fill="#edf2fa" stroke="#51688f" stroke-width="1.1"/><path d="M3 5.8H8.600" stroke="#33486e" stroke-width="1.600"/></svg>
<svg style="left:670.200px;top:516.700px" width="12" height="12"><circle cx="5.800" cy="5.800" r="5" fill="#edf2fa" stroke="#51688f" stroke-width="1.100"/><path d="M3 5.800H8.600M5.800 3V8.600" stroke="#33486e" stroke-width="1.600"/></svg>
<svg style="left:623.400px;top:517.500px" width="7" height="11"><path d="M0.500 0.500H6.300V6.300L3.400 9.800L0.500 6.300z" fill="#f1f5fb" stroke="#51688f" stroke-width="0.900"/></svg>
<div class="a" style="left:632.8px;top:519.5px;width:1px;height:6px;background:#dfeafa;"></div>
<div class="a" style="left:695.2px;top:527px;width:1.4px;height:1.4px;background:#4f6fa8;"></div>
<div class="a" style="left:692.6px;top:527px;width:1.4px;height:1.4px;background:#4f6fa8;"></div>
<div class="a" style="left:695.2px;top:524.4px;width:1.4px;height:1.4px;background:#4f6fa8;"></div>
<div class="a" style="left:690px;top:527px;width:1.4px;height:1.4px;background:#4f6fa8;"></div>
<div class="a" style="left:692.6px;top:524.4px;width:1.4px;height:1.4px;background:#4f6fa8;"></div>
<div class="a" style="left:695.2px;top:521.8px;width:1.4px;height:1.4px;background:#4f6fa8;"></div>
<div class="a" style="left:0px;top:0px;width:700px;height:0.9px;background:#34507f;"></div>
<div class="a" style="left:0px;top:0.9px;width:700px;height:1px;background:#e6effb;"></div>
<div class="a" style="left:0px;top:0px;width:0.8px;height:532px;background:#4f6f9f;"></div>
<div class="a" style="left:0.8px;top:22px;width:2.2px;height:508px;background:linear-gradient(90deg,#b5d0f3,#cfe0f8);"></div>
<div class="a" style="left:696.4px;top:22px;width:1px;height:508px;background:#c9ddf8;"></div>
<div class="a" style="left:697.3px;top:1px;width:1.3px;height:529px;background:#dbe8f9;"></div>
<div class="a" style="left:698.6px;top:0px;width:1.4px;height:532px;background:linear-gradient(90deg,#79a6e0,#5f8fd0);"></div>
<div class="a" style="left:0px;top:529.8px;width:700px;height:1px;background:#6f93c8;"></div>
<div class="a" style="left:0px;top:530.8px;width:700px;height:1.2px;background:#34507f;"></div>
</div>
</body></html>
